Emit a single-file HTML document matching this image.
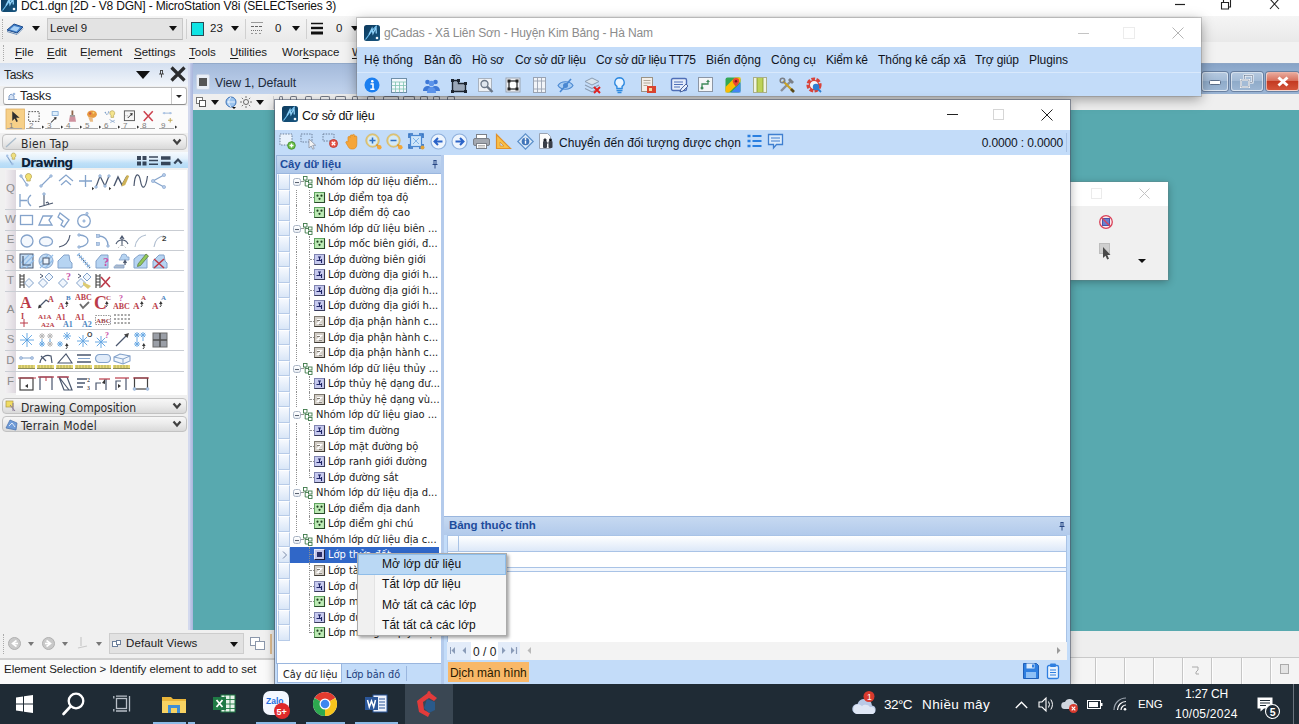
<!DOCTYPE html>
<html><head><meta charset="utf-8"><title>screen</title>
<style>
*{box-sizing:border-box;margin:0;padding:0}
html,body{width:1299px;height:724px;overflow:hidden;background:#f0f0f0;font-family:"Liberation Sans","DejaVu Sans",sans-serif;font-size:12px;color:#000}
.a{position:absolute}
.t{position:absolute;white-space:nowrap;line-height:1}
svg{position:absolute;overflow:visible}
/* MicroStation main */
#mstitle{left:0;top:0;width:1299px;height:16px;background:#fff}
#mstool{left:0;top:16px;width:1299px;height:26px;background:linear-gradient(#f5f5f5,#e9e9e9)}
#msmenu{left:0;top:42px;width:1299px;height:21px;background:#f2f2f2}
#tasks{left:0;top:63px;width:190px;height:568px;background:#f0f0f0}
#view{left:189px;top:63px;width:1110px;height:568px;background:#58a9af}
#viewtitle{left:0;top:0;width:1109px;height:31px;background:linear-gradient(#a9bfdc,#c4d4ea)}
#viewtool{left:3px;top:30px;width:1106px;height:16px;background:#f0f0f0}
#bottombar{left:0;top:630px;width:1299px;height:55px;background:#f0f0f0}
#taskbar{left:0;top:685px;width:1299px;height:39px;background:#1d2a38}

.ms{font-size:12px;color:#1a1a1a}
.ul{text-decoration:underline;text-underline-offset:2px}
.arr{width:0;height:0;border-left:4.5px solid transparent;border-right:4.5px solid transparent;border-top:5px solid #111}
.ms{font-size:11.5px}
.sg{font-size:12px;color:#111;letter-spacing:-.25px}
.tr{font-family:"DejaVu Sans Condensed","DejaVu Sans","Liberation Sans",sans-serif;font-size:11px;color:#1a1a1a}
.win{box-shadow:0 0 0 1px rgba(80,90,110,.6),0 3px 10px rgba(0,0,0,.35)}
.wins{box-shadow:0 0 0 1px rgba(110,110,110,.3),0 3px 12px rgba(0,0,0,.38)}
#tasks svg{opacity:.85}

</style></head><body>
<!-- top -->
<div class="a" id="mstitle"></div>
<div class="a" id="mstool"></div>
<div class="a" id="msmenu"></div>

<!-- MS title -->
<svg class="a" style="left:1px;top:-4px" width="16" height="16" viewBox="0 0 16 16"><defs><linearGradient id="lgC" x1="0" y1="0" x2="1" y2="1"><stop offset="0" stop-color="#0d3b5e"/><stop offset="1" stop-color="#17557f"/></linearGradient></defs><rect x="0" y="0" width="16" height="16" rx="2.5" fill="url(#lgC)"/><path d="M1.5 14.5C5 10 8 5 12.5 .8" stroke="#6cc0f2" stroke-width="1.1" fill="none"/><path d="M5 9.5l3-6 1 5 3-6 .3 6" stroke="#8fd0f7" stroke-width="1.3" fill="none"/><circle cx="13" cy="13" r="1.3" fill="#f2f8fc"/></svg>
<div class="t" id="mstt" style="left:21px;top:0px;font-size:12px;letter-spacing:-.17px;color:#111">DC1.dgn [2D - V8 DGN] - MicroStation V8i (SELECTseries 3)</div>
<!-- main win buttons -->
<svg class="a" style="left:1170px;top:0" width="129" height="14" viewBox="0 0 129 14"><path d="M5 4.5H15" stroke="#222" stroke-width="1.2"/><path d="M51.5 2.5h7v6.5h-7z M53.5 2.5v-2.5 M60.5 0v7h-2" stroke="#222" stroke-width="1.1" fill="none"/><path d="M100 -1L109 9M109 -1L100 9" stroke="#222" stroke-width="1.1"/></svg>
<!-- MS toolbar -->
<div class="a" style="left:2px;top:19px;width:2px;height:20px;border-left:1px dotted #aaa"></div>
<svg class="a" style="left:6px;top:21px" width="18" height="16" viewBox="0 0 18 16"><path d="M1 9L11 12L17 6L8 3Z" fill="#3f7fc9" stroke="#1f4c8c" stroke-width="1"/><path d="M4 8.5L10.5 10.5L14 6.5L8 5Z" fill="#a8d0f5"/><path d="M1 10.5L11 13.5L17 7.5" stroke="#6c8fb8" fill="none"/></svg>
<div class="a arr" style="left:32px;top:26px"></div>
<div class="a" style="left:47px;top:18px;width:136px;height:22px;background:#e3e3e3;border:1px solid #c8c8c8;border-bottom-color:#b5b5b5"></div>
<div class="t ms" style="left:50px;top:23px">Level 9</div>
<div class="a arr" style="left:169px;top:26px"></div>
<div class="a" style="left:186px;top:19px;width:1px;height:20px;background:#d0d0d0"></div>
<div class="a" style="left:191px;top:22px;width:13px;height:14px;background:#10e4e4;border:1px solid #2a4a55"></div>
<div class="t ms" style="left:210px;top:23px">23</div>
<div class="a arr" style="left:231px;top:26px"></div>
<div class="a" style="left:245px;top:19px;width:1px;height:20px;background:#d0d0d0"></div>
<svg class="a" style="left:250px;top:21px" width="14" height="14" viewBox="0 0 14 14"><path d="M1 1.5H13" stroke="#999" stroke-width="1"/><path d="M1 5.5H13" stroke="#666" stroke-width="1" stroke-dasharray="3 1"/><path d="M1 9.5H13" stroke="#777" stroke-width="1" stroke-dasharray="1 1"/><path d="M1 12.5H13" stroke="#999" stroke-width="1" stroke-dasharray="2 2"/></svg>
<div class="t ms" style="left:275px;top:23px">0</div>
<div class="a arr" style="left:292px;top:26px"></div>
<div class="a" style="left:306px;top:19px;width:1px;height:20px;background:#d0d0d0"></div>
<svg class="a" style="left:311px;top:22px" width="13" height="13" viewBox="0 0 13 13"><path d="M0 1.5H12" stroke="#111" stroke-width="1.5"/><path d="M0 6H12" stroke="#111" stroke-width="2.4"/><path d="M0 11H12" stroke="#111" stroke-width="3"/></svg>
<div class="t ms" style="left:336px;top:23px">0</div>
<div class="a arr" style="left:351px;top:26px"></div>
<!-- MS menu -->
<div class="a" style="left:3px;top:45px;width:2px;height:16px;border-left:1px dotted #aaa"></div>
<div class="t ms" style="left:15px;top:47px"><span class="ul">F</span>ile</div>
<div class="t ms" style="left:47px;top:47px"><span class="ul">E</span>dit</div>
<div class="t ms" style="left:80px;top:47px">E<span class="ul">l</span>ement</div>
<div class="t ms" style="left:134px;top:47px"><span class="ul">S</span>ettings</div>
<div class="t ms" style="left:189px;top:47px"><span class="ul">T</span>ools</div>
<div class="t ms" style="left:230px;top:47px"><span class="ul">U</span>tilities</div>
<div class="t ms" style="left:282px;top:47px">Wor<span class="ul">k</span>space</div>
<div class="t ms" style="left:352px;top:47px"><span class="ul">W</span>indow</div>

<!-- view -->
<div class="a" id="view">
<div class="a" style="left:0;top:0;width:1110px;height:31px;background:linear-gradient(#a3b9da,#c1d3ed)"></div>
<div class="a" style="left:300px;top:0;width:810px;height:32px;background:linear-gradient(#86a2c6 0%,#8fabcd 20%,#99b3d3 100%)"></div>
<div class="a" style="left:0;top:0;width:1110px;height:1px;background:#8fa6c6;opacity:.8"></div>
<div class="a" style="left:4px;top:31px;width:1106px;height:16px;background:#efefef"></div>
<div class="a" style="left:0;top:0;width:4px;height:568px;background:linear-gradient(90deg,#c9d1ec,#a9b5dc)"></div>
<div class="a" style="left:1px;top:1px;width:0;height:0">
<div class="a" style="left:6px;top:10px;width:14px;height:16px;background:#e9eef6;border-radius:2px;border:1px solid #c9d4e6"></div><div class="a" style="left:9px;top:14px;width:8px;height:8px;background:#555"></div>
<div class="t" style="left:25px;top:13px;font-size:12.3px;color:#1d2a3c;letter-spacing:-.1px">View 1, Default</div>
<svg style="left:6px;top:33px" width="11" height="11" viewBox="0 0 11 11"><rect x=".5" y=".5" width="6" height="6" fill="#fff" stroke="#777"/><rect x="3.5" y="3.5" width="6" height="6" fill="#fff" stroke="#555"/></svg>
<div class="a arr" style="left:21px;top:36px;border-left-width:4px;border-right-width:4px"></div>
<svg style="left:35px;top:32px" width="13" height="14" viewBox="0 0 13 14"><circle cx="6" cy="6" r="5" fill="#9cc4ee" stroke="#3f74b8"/><path d="M2 6h8M6 1c-3 3-3 7 0 10" stroke="#fff" stroke-width=".8" fill="none"/><path d="M7 11l2 2 2-2z" fill="#111"/></svg>
<svg style="left:50px;top:32px" width="12" height="12" viewBox="0 0 12 12"><circle cx="6" cy="6" r="2.5" fill="#f2f2f2" stroke="#666"/><path d="M6 0v2M6 10v2M0 6h2M10 6h2M1.8 1.8l1.4 1.4M8.8 8.8l1.4 1.4M10.2 1.8L8.8 3.2M1.8 10.2l1.4-1.4" stroke="#777" stroke-width="1"/></svg>
<div class="a arr" style="left:66px;top:36px;border-left-width:4px;border-right-width:4px"></div>
<div class="a" style="left:83px;top:32px;width:1px;height:13px;background:#cfcfcf"></div>
<div class="a" style="left:89px;top:32px;width:4px;height:4px;border:1px solid #4a5160;border-bottom:none;border-radius:2px 2px 0 0;opacity:.75"></div>
<div class="a" style="left:100px;top:32px;width:7px;height:4px;border:1px solid #4a5160;border-bottom:none;border-radius:2px 2px 0 0;opacity:.75"></div>
<div class="a" style="left:115px;top:32px;width:7px;height:4px;border:1px solid #4a5160;border-bottom:none;border-radius:2px 2px 0 0;opacity:.75"></div>
<div class="a" style="left:130px;top:32px;width:10px;height:4px;border:1px solid #4a5160;border-bottom:none;border-radius:2px 2px 0 0;opacity:.75"></div>
<div class="a" style="left:145px;top:32px;width:11px;height:4px;border:1px solid #4a5160;border-bottom:none;border-radius:2px 2px 0 0;opacity:.75"></div>
<div class="a" style="left:162px;top:32px;width:6px;height:4px;border:1px solid #4a5160;border-bottom:none;border-radius:2px 2px 0 0;opacity:.75"></div>
<div class="a" style="left:177px;top:32px;width:8px;height:4px;border:1px solid #4a5160;border-bottom:none;border-radius:2px 2px 0 0;opacity:.75"></div>
<div class="a" style="left:193px;top:32px;width:16px;height:4px;border:1px solid #4a5160;border-bottom:none;border-radius:2px 2px 0 0;opacity:.75"></div>
<div class="a" style="left:213px;top:32px;width:12px;height:4px;border:1px solid #4a5160;border-bottom:none;border-radius:2px 2px 0 0;opacity:.75"></div>
<div class="a" style="left:230px;top:32px;width:8px;height:4px;border:1px solid #4a5160;border-bottom:none;border-radius:2px 2px 0 0;opacity:.75"></div>
<div class="a" style="left:243px;top:32px;width:7px;height:4px;border:1px solid #4a5160;border-bottom:none;border-radius:2px 2px 0 0;opacity:.75"></div>
<div class="a" style="left:257px;top:32px;width:8px;height:4px;border:1px solid #4a5160;border-bottom:none;border-radius:2px 2px 0 0;opacity:.75"></div>
<div class="a" style="left:1012px;top:8px;width:26px;height:19px;border-radius:3px;border:1px solid rgba(255,255,255,.55);box-shadow:0 0 0 1px rgba(70,90,120,.55);background:linear-gradient(#b4c8df 0%,#a3bbd6 45%,#8fabc9 50%,#9cb6d3 100%)"></div><svg style="left:1019px;top:16px" width="12" height="5" viewBox="0 0 12 5"><rect x=".5" y=".5" width="11" height="4" rx="1" fill="#fff" stroke="#5c6f8a"/></svg>
<div class="a" style="left:1041px;top:8px;width:32px;height:19px;border-radius:3px;border:1px solid rgba(255,255,255,.55);box-shadow:0 0 0 1px rgba(70,90,120,.55);background:linear-gradient(#b4c8df 0%,#a3bbd6 45%,#8fabc9 50%,#9cb6d3 100%)"></div><svg style="left:1050px;top:11px" width="14" height="13" viewBox="0 0 14 13"><rect x="4.5" y=".5" width="8" height="7" fill="none" stroke="#fff" stroke-width="2"/><rect x="4.5" y=".5" width="8" height="7" fill="none" stroke="#5c6f8a" stroke-width=".6"/><rect x="1" y="5" width="8" height="7" fill="#a3bbd6" stroke="#fff" stroke-width="2"/><rect x="1" y="5" width="8" height="7" fill="none" stroke="#5c6f8a" stroke-width=".6"/></svg>
<div class="a" style="left:1076px;top:8px;width:33px;height:19px;border-radius:3px;border:1px solid rgba(255,255,255,.55);box-shadow:0 0 0 1px rgba(70,90,120,.55);background:linear-gradient(#e8a89a 0%,#d8705c 45%,#c43a22 50%,#d4553a 100%)"></div><svg style="left:1087px;top:12px" width="12" height="11" viewBox="0 0 12 11"><path d="M1.5 1.5l9 8M10.5 1.5l-9 8" stroke="#fff" stroke-width="3"/></svg>
</div></div>

<!-- tasks -->
<div class="a" id="tasks">
<div class="a" style="left:0;top:0;width:189px;height:23px;background:linear-gradient(#d3dff0,#f1f5fa)"></div>
<div class="t" style="left:4px;top:6px;font-size:12px;letter-spacing:-.3px;color:#222">Tasks</div>
<div class="a" style="left:136px;top:8px;width:0;height:0;border-left:7.5px solid transparent;border-right:7.5px solid transparent;border-top:8px solid #111"></div>
<svg style="left:158px;top:6px" width="7" height="9" viewBox="0 0 7 9"><path d="M2 1.5h3M2.5 1.5v3.5M4.5 1.5v3.5M1 5h5M3.5 5v3.5" stroke="#333" stroke-width="1" fill="none"/></svg>
<svg style="left:170px;top:3px" width="16" height="16" viewBox="0 0 16 16"><path d="M1.5 1.5L14.5 14.5M14.5 1.5L1.5 14.5" stroke="#0a0a0a" stroke-width="3.2" fill="none"/></svg>
<div class="a" style="left:3px;top:24px;width:184px;height:18px;background:#fff;border:1px solid #b9b9b9;border-radius:3px;border-bottom-color:#8d8d8d"></div>
<div class="a" style="left:171px;top:25px;width:1px;height:16px;background:#c9c9c9"></div>
<svg style="left:7px;top:28px" width="11" height="10" viewBox="0 0 11 10"><path d="M1 8.5h9M2 8V5l2-2 3 2v3" stroke="#6d8fc0" fill="#cfe0f5" stroke-width="1"/><circle cx="7" cy="3" r="1.3" fill="#8fb0dc"/></svg>
<div class="t" style="left:20px;top:27px;font-size:12.5px;letter-spacing:-.2px;color:#222">Tasks</div>
<div class="a" style="left:175.5px;top:32px;width:0;height:0;border-left:3px solid transparent;border-right:3px solid transparent;border-top:3.5px solid #222"></div>
<div class="a" style="left:0;top:43px;width:188px;height:27px;background:#fbfbfb"></div>
<div class="a" style="left:16px;top:107px;width:171px;height:225px;background:#fff"></div>
<div class="a" style="left:188px;top:0;width:2px;height:568px;background:#d3d9ee"></div>
<svg style="left:6px;top:46px" width="21" height="21" viewBox="0 0 21 21"><rect x="0" y="0" width="18.5" height="20" fill="#f7c974" stroke="#d9a24a" stroke-width=".8"/><g transform="translate(2.5,0) scale(.75)"><path d="M5 3v13l3.2-3.4 2.3 4.6 2-1-2.3-4.4h4.6z" fill="#0d0d0d"/></g><text x="3" y="18.5" font-size="8" fill="#666" font-family="Liberation Sans,sans-serif">1</text><path d="M1 19.5h15" stroke="#9a9a9a" stroke-width="1"/></svg>
<svg style="left:25px;top:46px" width="21" height="21" viewBox="0 0 21 21"><g transform="translate(2.5,0) scale(.75)"><rect x="1.5" y="3.5" width="14" height="13" fill="none" stroke="#222" stroke-width="1.2" stroke-dasharray="2.2 1.6"/></g><text x="4" y="18.5" font-size="8" fill="#666" font-family="Liberation Sans,sans-serif">2</text><path d="M1 19.5h15" stroke="#9a9a9a" stroke-width="1"/><path d="M17 16.5l2.2 1.6L17 19.7z" fill="#111"/></svg>
<svg style="left:44px;top:46px" width="21" height="21" viewBox="0 0 21 21"><g transform="translate(2.5,0) scale(.75)"><rect x="7.5" y="3.5" width="8" height="5" fill="#d8ecfb" stroke="#5b8fc9" stroke-width="1"/><path d="M6 18l6-6" stroke="#111" stroke-width="1.4"/><path d="M13.5 10.5l-4 .8 3.2 3.2z" fill="#111"/></g><text x="3" y="18.5" font-size="8" fill="#666" font-family="Liberation Sans,sans-serif">3</text><path d="M1 19.5h15" stroke="#9a9a9a" stroke-width="1"/><path d="M17 16.5l2.2 1.6L17 19.7z" fill="#111"/></svg>
<svg style="left:63px;top:46px" width="21" height="21" viewBox="0 0 21 21"><g transform="translate(2.5,0) scale(.75)"><path d="M8 2h2.4v6H8z" fill="#7b4a2a"/><path d="M6 8h6.5l1.5 9H4.5z" fill="#c77f8e"/><path d="M6 8h6.5v2.3H6z" fill="#8d8d8d"/></g><text x="3" y="18.5" font-size="8" fill="#666" font-family="Liberation Sans,sans-serif">4</text><path d="M1 19.5h15" stroke="#9a9a9a" stroke-width="1"/><path d="M17 16.5l2.2 1.6L17 19.7z" fill="#111"/></svg>
<svg style="left:82px;top:46px" width="21" height="21" viewBox="0 0 21 21"><g transform="translate(2.5,0) scale(.75)"><ellipse cx="10" cy="7" rx="6.5" ry="5" fill="#e58a1f"/><circle cx="7.5" cy="6" r="1.6" fill="#c7422a"/><circle cx="12" cy="5" r="1.3" fill="#f3d35c"/><path d="M5 11l2.5 6h4l-.8-6z" fill="#e7b070"/></g><text x="3" y="18.5" font-size="8" fill="#666" font-family="Liberation Sans,sans-serif">5</text><path d="M1 19.5h15" stroke="#9a9a9a" stroke-width="1"/><path d="M17 16.5l2.2 1.6L17 19.7z" fill="#111"/></svg>
<svg style="left:101px;top:46px" width="21" height="21" viewBox="0 0 21 21"><g transform="translate(2.5,0) scale(.75)"><path d="M11.5 2.2a3.4 3.4 0 0 1 2 6.2v2.8h-3.6V8.4a3.4 3.4 0 0 1 1.6-6.2z" fill="#f3e07a" stroke="#a08a2a" stroke-width=".8"/><path d="M2.5 5l2 3M6.5 4.5l-1 3" stroke="#6f93c2" stroke-width="1"/><circle cx="2.5" cy="4.5" r="1" fill="#6f93c2"/><circle cx="6.8" cy="4" r="1" fill="#6f93c2"/><path d="M8 14l7 4M9 18l6-3" stroke="#6f93c2" stroke-width="1"/></g><text x="3" y="18.5" font-size="8" fill="#666" font-family="Liberation Sans,sans-serif">6</text><path d="M1 19.5h15" stroke="#9a9a9a" stroke-width="1"/><path d="M17 16.5l2.2 1.6L17 19.7z" fill="#111"/></svg>
<svg style="left:120px;top:46px" width="21" height="21" viewBox="0 0 21 21"><g transform="translate(2.5,0) scale(.75)"><rect x="2.5" y="2.5" width="13.5" height="13" fill="#f5f5f5" stroke="#333" stroke-width="1.2"/><path d="M7 12l5-5" stroke="#111" stroke-width="1.3"/><path d="M13.6 5.2l-4 .9 3.2 3.1z" fill="#111"/><path d="M4 9h4" stroke="#777" stroke-dasharray="1 1"/></g><text x="3" y="18.5" font-size="8" fill="#666" font-family="Liberation Sans,sans-serif">7</text><path d="M1 19.5h15" stroke="#9a9a9a" stroke-width="1"/><path d="M17 16.5l2.2 1.6L17 19.7z" fill="#111"/></svg>
<svg style="left:139px;top:46px" width="21" height="21" viewBox="0 0 21 21"><g transform="translate(2.5,0) scale(.75)"><path d="M3 3l12 13M15 3L3 16" stroke="#c4202f" stroke-width="2"/></g><text x="3" y="18.5" font-size="8" fill="#666" font-family="Liberation Sans,sans-serif">8</text><path d="M1 19.5h15" stroke="#9a9a9a" stroke-width="1"/></svg>
<svg style="left:158px;top:46px" width="21" height="21" viewBox="0 0 21 21"><g transform="translate(2.5,0) scale(.75)"><path d="M3 5.5h12" stroke="#6f93c2" stroke-width="1"/><circle cx="5" cy="5.5" r="1.4" fill="#9dbbe3"/><circle cx="13" cy="5.5" r="1.4" fill="#9dbbe3"/><path d="M10 15h6M13 12v6" stroke="#b79b3a" stroke-width="1.3"/></g><text x="3" y="18.5" font-size="8" fill="#666" font-family="Liberation Sans,sans-serif">9</text><path d="M1 19.5h15" stroke="#9a9a9a" stroke-width="1"/><path d="M17 16.5l2.2 1.6L17 19.7z" fill="#111"/></svg>
<div class="a" style="left:2px;top:71px;width:185px;height:16px;border:1px solid #c2c2c2;border-radius:4px;background:linear-gradient(#f7f7f7 0%,#ececec 45%,#d9d9d9 100%)"></div><svg style="left:5px;top:73px" width="14" height="13" viewBox="0 0 14 13"><path d="M1 11L11 2" stroke="#9fb4c6" stroke-width="1.3"/></svg><div class="t" style="left:21px;top:74.5px;font-size:12px;letter-spacing:0.3px;color:#2a2a2a;font-family:'DejaVu Sans Condensed','DejaVu Sans',sans-serif">Bien Tap</div><svg style="left:172px;top:75px" width="10" height="8" viewBox="0 0 10 8"><path d="M1.5 1.5L5 5.5 8.5 1.5" stroke="#222" stroke-width="2.2" fill="none"/></svg>
<div class="a" style="left:0;top:89px;width:188px;height:16px;background:linear-gradient(#f6fafe 0%,#e3f1fc 40%,#bfe0f8 70%,#b3daf6 100%)"></div>
<svg style="left:5px;top:89px" width="13" height="15" viewBox="0 0 13 15"><path d="M2 4l5 8" stroke="#6f93c2" stroke-width="1.1"/><circle cx="2.2" cy="3.8" r="1.2" fill="#9dbbe3"/><circle cx="7.4" cy="12" r="1.2" fill="#9dbbe3"/><path d="M8.5 1a2.4 2.4 0 0 1 1.3 4.4v1.8h-2.6V5.4A2.4 2.4 0 0 1 8.5 1z" fill="#f0dc6a" stroke="#a08a2a" stroke-width=".6"/></svg>
<div class="t" style="left:21px;top:94px;font-size:12px;font-weight:bold;color:#0e2238;font-family:'DejaVu Sans',sans-serif;letter-spacing:-.7px">Drawing</div>
<svg style="left:137px;top:93px" width="10" height="10" viewBox="0 0 10 10"><rect x="0" y="0" width="4" height="4" fill="#1c2a3e"/><rect x="5.5" y="0" width="4" height="4" fill="#1c2a3e"/><rect x="0" y="5.5" width="4" height="4" fill="#1c2a3e"/><rect x="5.5" y="5.5" width="4" height="4" fill="#1c2a3e"/></svg>
<svg style="left:149px;top:93px" width="10" height="10" viewBox="0 0 10 10"><path d="M0 1h9M0 4.6h9M0 8.2h9" stroke="#1c2a3e" stroke-width="1.5"/></svg>
<svg style="left:161px;top:93px" width="10" height="10" viewBox="0 0 10 10"><path d="M0 2h9.5M0 7.5h9.5" stroke="#1c2a3e" stroke-width="3.3"/></svg>
<svg style="left:173px;top:94px" width="10" height="8" viewBox="0 0 10 8"><path d="M1.3 6.5L5 2.5 8.7 6.5" stroke="#1c2a3e" stroke-width="2.2" fill="none"/></svg>
<div class="a" style="left:5px;top:107px;width:11px;height:39px;background:linear-gradient(90deg,#f3f1f3,#ddd7de)"></div>
<div class="t" style="left:5px;top:120px;width:11px;text-align:center;font-size:11.5px;color:#8c8c8c">Q</div>
<div class="a" style="left:5px;top:146px;width:179px;height:1px;background:#c9cdd3"></div>
<div class="a" style="left:5px;top:147px;width:11px;height:20px;background:linear-gradient(90deg,#f3f1f3,#ddd7de)"></div>
<div class="t" style="left:5px;top:151px;width:11px;text-align:center;font-size:11.5px;color:#8c8c8c">W</div>
<div class="a" style="left:5px;top:167px;width:179px;height:1px;background:#c9cdd3"></div>
<div class="a" style="left:5px;top:168px;width:11px;height:19px;background:linear-gradient(90deg,#f3f1f3,#ddd7de)"></div>
<div class="t" style="left:5px;top:171px;width:11px;text-align:center;font-size:11.5px;color:#8c8c8c">E</div>
<div class="a" style="left:5px;top:187px;width:179px;height:1px;background:#c9cdd3"></div>
<div class="a" style="left:5px;top:188px;width:11px;height:19px;background:linear-gradient(90deg,#f3f1f3,#ddd7de)"></div>
<div class="t" style="left:5px;top:191px;width:11px;text-align:center;font-size:11.5px;color:#8c8c8c">R</div>
<div class="a" style="left:5px;top:207px;width:179px;height:1px;background:#c9cdd3"></div>
<div class="a" style="left:5px;top:208px;width:11px;height:20px;background:linear-gradient(90deg,#f3f1f3,#ddd7de)"></div>
<div class="t" style="left:5px;top:212px;width:11px;text-align:center;font-size:11.5px;color:#8c8c8c">T</div>
<div class="a" style="left:5px;top:228px;width:179px;height:1px;background:#c9cdd3"></div>
<div class="a" style="left:5px;top:229px;width:11px;height:37px;background:linear-gradient(90deg,#f3f1f3,#ddd7de)"></div>
<div class="t" style="left:5px;top:241px;width:11px;text-align:center;font-size:11.5px;color:#8c8c8c">A</div>
<div class="a" style="left:5px;top:266px;width:179px;height:1px;background:#c9cdd3"></div>
<div class="a" style="left:5px;top:267px;width:11px;height:20px;background:linear-gradient(90deg,#f3f1f3,#ddd7de)"></div>
<div class="t" style="left:5px;top:271px;width:11px;text-align:center;font-size:11.5px;color:#8c8c8c">S</div>
<div class="a" style="left:5px;top:287px;width:179px;height:1px;background:#c9cdd3"></div>
<div class="a" style="left:5px;top:288px;width:11px;height:20px;background:linear-gradient(90deg,#f3f1f3,#ddd7de)"></div>
<div class="t" style="left:5px;top:292px;width:11px;text-align:center;font-size:11.5px;color:#8c8c8c">D</div>
<div class="a" style="left:5px;top:308px;width:179px;height:1px;background:#c9cdd3"></div>
<div class="a" style="left:5px;top:309px;width:11px;height:21px;background:linear-gradient(90deg,#f3f1f3,#ddd7de)"></div>
<div class="t" style="left:5px;top:313px;width:11px;text-align:center;font-size:11.5px;color:#8c8c8c">F</div>
<svg style="left:18px;top:109px" width="18" height="18" viewBox="0 0 18 18"><path d="M3 4l6 9" stroke="#6f93c2" stroke-width="1.1" fill="none" /><circle cx="3" cy="4" r="1.3" fill="#a9c3e6" stroke="#6f93c2" stroke-width=".6"/><circle cx="9" cy="13" r="1.3" fill="#a9c3e6" stroke="#6f93c2" stroke-width=".6"/><path d="M10.5 1.5a3 3 0 0 1 1.7 5.5v2h-3.4v-2A3 3 0 0 1 10.5 1.5z" fill="#f0dc5a" stroke="#a08a2a" stroke-width=".7"/></svg>
<svg style="left:38px;top:109px" width="18" height="18" viewBox="0 0 18 18"><path d="M3 14L13 4" stroke="#6f93c2" stroke-width="1.1" fill="none" /><circle cx="3" cy="14" r="1.3" fill="#a9c3e6" stroke="#6f93c2" stroke-width=".6"/><circle cx="13" cy="4" r="1.3" fill="#a9c3e6" stroke="#6f93c2" stroke-width=".6"/></svg>
<svg style="left:57px;top:109px" width="18" height="18" viewBox="0 0 18 18"><path d="M2 9l7-6 7 6M4 13l5-4.5 5 4.5" stroke="#6f93c2" stroke-width="1.2" fill="none" /></svg>
<svg style="left:77px;top:109px" width="18" height="18" viewBox="0 0 18 18"><path d="M2 9h13M8.5 3v12" stroke="#6f93c2" stroke-width="1.3" fill="none" /></svg>
<svg style="left:94px;top:109px" width="18" height="18" viewBox="0 0 18 18"><path d="M2 15l4-11 5 10 4-10" stroke="#2b3a55" stroke-width="1.2" fill="none" /><circle cx="2" cy="15" r="1.3" fill="#a9c3e6" stroke="#6f93c2" stroke-width=".6"/><circle cx="6" cy="4" r="1.3" fill="#a9c3e6" stroke="#6f93c2" stroke-width=".6"/><circle cx="11" cy="14" r="1.3" fill="#a9c3e6" stroke="#6f93c2" stroke-width=".6"/><circle cx="15" cy="4" r="1.3" fill="#a9c3e6" stroke="#6f93c2" stroke-width=".6"/><path d="M-2 15l2.2 1.6L-2 18.2z" fill="#111"/><path d="M15 15l2.2 1.6L15 18.2z" fill="#111"/></svg>
<svg style="left:113px;top:109px" width="18" height="18" viewBox="0 0 18 18"><path d="M1 14l4-9 4 8 5-9" stroke="#2b3a55" stroke-width="1.4" fill="none" /><path d="M9 12l5-9 2.2 1-4 9-3.5 1.5z" fill="#c7a53a"/></svg>
<svg style="left:132px;top:109px" width="18" height="18" viewBox="0 0 18 18"><path d="M2 14c1-14 5-14 6.5-5s5 9 7-5" stroke="#2b3a55" stroke-width="1.2" fill="none" /></svg>
<svg style="left:150px;top:109px" width="18" height="18" viewBox="0 0 18 18"><path d="M14 3L3 9l11 6" stroke="#6f93c2" stroke-width="1.2" fill="none" /><circle cx="14" cy="3" r="1.6" fill="#a9c3e6" stroke="#6f93c2" stroke-width=".6"/><circle cx="3" cy="9" r="1.6" fill="#a9c3e6" stroke="#6f93c2" stroke-width=".6"/><circle cx="14" cy="15" r="1.6" fill="#a9c3e6" stroke="#6f93c2" stroke-width=".6"/></svg>
<svg style="left:18px;top:128px" width="18" height="18" viewBox="0 0 18 18"><path d="M2 3v13M2 9.5h7M13 4c-4 3-4 8 0 11" stroke="#6f93c2" stroke-width="1.3" fill="none" /></svg>
<svg style="left:38px;top:128px" width="18" height="18" viewBox="0 0 18 18"><path d="M6 3v11M1 16l14-4M8 12c2-2 3 0 2 2" stroke="#2b3a55" stroke-width="1.1" fill="none" /><circle cx="6" cy="3" r="1.3" fill="#a9c3e6" stroke="#6f93c2" stroke-width=".6"/></svg>
<svg style="left:18px;top:148px" width="18" height="18" viewBox="0 0 18 18"><rect x="2.5" y="4.5" width="12" height="9" fill="#fff" stroke="#6f93c2" stroke-width="1.3"/></svg>
<svg style="left:37px;top:148px" width="18" height="18" viewBox="0 0 18 18"><path d="M2 14L6 5h9l-3 4 3 5z" stroke="#6f93c2" stroke-width="1.3" fill="#fff" /></svg>
<svg style="left:56px;top:148px" width="18" height="18" viewBox="0 0 18 18"><path d="M4 2l9 7-5 7-3-2 2-4-5-4z" stroke="#6f93c2" stroke-width="1.3" fill="#fff" /></svg>
<svg style="left:75px;top:148px" width="18" height="18" viewBox="0 0 18 18"><circle cx="9" cy="10" r="6.3" fill="#fff" stroke="#6f93c2" stroke-width="1.3"/><circle cx="9" cy="10" r="1.2" fill="#a9c3e6" stroke="#6f93c2" stroke-width=".6"/><circle cx="12" cy="2.5" r="1.2" fill="#a9c3e6" stroke="#6f93c2" stroke-width=".6"/></svg>
<svg style="left:18px;top:169px" width="18" height="18" viewBox="0 0 18 18"><circle cx="9" cy="9" r="6" fill="#f3f7fd" stroke="#6f93c2" stroke-width="1.3"/></svg>
<svg style="left:37px;top:169px" width="18" height="18" viewBox="0 0 18 18"><ellipse cx="9" cy="9.5" rx="6.5" ry="4.5" fill="#f3f7fd" stroke="#6f93c2" stroke-width="1.3"/></svg>
<svg style="left:56px;top:169px" width="18" height="18" viewBox="0 0 18 18"><path d="M3 15c6-1 10-5 11-12" stroke="#2b3a55" stroke-width="1.1" fill="none" /></svg>
<svg style="left:75px;top:169px" width="18" height="18" viewBox="0 0 18 18"><path d="M4 3c12 0 12 11 0 12" stroke="#6f93c2" stroke-width="1.3" fill="none" /><circle cx="4" cy="3" r="1.3" fill="#a9c3e6" stroke="#6f93c2" stroke-width=".6"/><circle cx="4" cy="15" r="1.3" fill="#a9c3e6" stroke="#6f93c2" stroke-width=".6"/></svg>
<svg style="left:94px;top:169px" width="18" height="18" viewBox="0 0 18 18"><path d="M4 4c7 0 10 4 10 10" stroke="#6f93c2" stroke-width="1.3" fill="none" /><rect x="2.5" y="2.5" width="3" height="3" fill="#a9c3e6" stroke="#6f93c2" stroke-width=".6"/><rect x="2.5" y="10.5" width="3" height="3" fill="#a9c3e6" stroke="#6f93c2" stroke-width=".6"/><circle cx="14" cy="14" r="1.3" fill="#a9c3e6" stroke="#6f93c2" stroke-width=".6"/></svg>
<svg style="left:113px;top:169px" width="18" height="18" viewBox="0 0 18 18"><path d="M3 12a6.5 6.5 0 0 1 12 0" stroke="#2b3a55" stroke-width="1.1" fill="none" /><path d="M9 14V5M7 7l2-3 2 3" stroke="#2b3a55" stroke-width="1.1" fill="none" /><path d="M5 16l4-4 4 4" stroke="#aaa" stroke-width="0.8" fill="none" stroke-dasharray="1.5 1"/></svg>
<svg style="left:132px;top:169px" width="18" height="18" viewBox="0 0 18 18"><path d="M3 15c1-7 5-11 11-12" stroke="#9fb0c6" stroke-width="1.1" fill="none" /></svg>
<svg style="left:151px;top:169px" width="18" height="18" viewBox="0 0 18 18"><path d="M3 15c1-7 5-11 10-11" stroke="#9fb0c6" stroke-width="1.1" fill="none" /><text x="11" y="9" font-size="8" fill="#111" font-family="Liberation Sans,sans-serif" font-weight="bold">2</text></svg>
<svg style="left:18px;top:189px" width="18" height="18" viewBox="0 0 18 18"><rect x="2" y="2" width="13" height="14" fill="#b9d7f3" stroke="#2b3a55"/><path d="M3 16L16 3M3 11l8-8M8 16l8-8" stroke="#7fb2e6" stroke-width="1.2"/><path d="M5 4v9h8" stroke="#2b3a55" stroke-width="1.2" fill="none" /></svg>
<svg style="left:37px;top:189px" width="18" height="18" viewBox="0 0 18 18"><circle cx="9" cy="9" r="7" fill="#b9d7f3" stroke="#6f93c2"/><path d="M3 16L16 3M3 11l8-8M8 16l8-8" stroke="#7fb2e6" stroke-width="1.2"/><rect x="6" y="6" width="6" height="6" fill="#e8f2fc" stroke="#2b3a55"/></svg>
<svg style="left:56px;top:189px" width="18" height="18" viewBox="0 0 18 18"><path d="M2 16V9l6-6h5l1 6 2 2v5z" stroke="#6f93c2" stroke-width="1" fill="#aacdf0" /></svg>
<svg style="left:75px;top:189px" width="18" height="18" viewBox="0 0 18 18"><path d="M3 2l12 14" stroke="#2b3a55" stroke-width="1" fill="none" /><path d="M3 2l12 14" stroke="#7fb2e6" stroke-width="3.5" fill="none" stroke-dasharray="1.5 1.5"/></svg>
<svg style="left:94px;top:189px" width="18" height="18" viewBox="0 0 18 18"><path d="M2 16V9l5-6h7v13z" stroke="#6f93c2" stroke-width="1" fill="#aacdf0" /><text x="9" y="14" font-size="12" font-weight="bold" fill="#c0309a" font-family="Liberation Serif,serif">?</text></svg>
<svg style="left:113px;top:189px" width="18" height="18" viewBox="0 0 18 18"><path d="M8 5a3 3 0 0 1 6 0h2v3H6z" stroke="#6f93c2" stroke-width="0.8" fill="#aacdf0" /><path d="M1 16a3 3 0 0 1 4-3h6v3z" stroke="#6f93c2" stroke-width="0.8" fill="#9fb0c6" /><path d="M12 13V9M10.5 11l1.5-2.5 1.5 2.5" stroke="#2b3a55" stroke-width="1.2" fill="none" /></svg>
<svg style="left:132px;top:189px" width="18" height="18" viewBox="0 0 18 18"><path d="M2 16V7l5-4h8v13z" stroke="#6f93c2" stroke-width="1" fill="#aacdf0" /><path d="M6 12L14 2l2.5 2-8 9.5-3 1z" fill="#7fbf3f" stroke="#3a5a1a" stroke-width=".7"/></svg>
<svg style="left:151px;top:189px" width="18" height="18" viewBox="0 0 18 18"><path d="M2 16V9l6-6h5l1 6 2 2v5z" stroke="#6f93c2" stroke-width="1" fill="#aacdf0" /><path d="M3 7l10 9M13 7L3 16" stroke="#b0182a" stroke-width="1.6" fill="none" /></svg>
<svg style="left:18px;top:209px" width="18" height="18" viewBox="0 0 18 18"><path d="M2 2v14M6 2v14M2 4h4M2 7h4M2 10h4M2 13h4" stroke="#222" stroke-width="1.1" fill="none"/><path d="M11 6.5l4.5 4.5-4.5 4.5-4.5-4.5z" fill="#eef5fd" stroke="#6f93c2" stroke-width="1"/></svg>
<svg style="left:37px;top:209px" width="18" height="18" viewBox="0 0 18 18"><path d="M6 6.5l4.5 4.5-4.5 4.5-4.5-4.5z" fill="#eef5fd" stroke="#6f93c2" stroke-width="1"/><path d="M12 1l4 4-4 4-4-4z" fill="#eef5fd" stroke="#6f93c2" stroke-width="1"/><path d="M3 2l3 2-3 2" stroke="#2b3a55" stroke-width="1" fill="none" /></svg>
<svg style="left:56px;top:209px" width="18" height="18" viewBox="0 0 18 18"><path d="M7 6.5l4.5 4.5-4.5 4.5-4.5-4.5z" fill="#eef5fd" stroke="#6f93c2" stroke-width="1"/><text x="10" y="8" font-size="10" font-weight="bold" fill="#c0309a" font-family="Liberation Serif,serif">?</text></svg>
<svg style="left:75px;top:209px" width="18" height="18" viewBox="0 0 18 18"><path d="M6 6.5l4.5 4.5-4.5 4.5-4.5-4.5z" fill="#eef5fd" stroke="#6f93c2" stroke-width="1"/><path d="M12 1l4 4-4 4-4-4z" fill="#eef5fd" stroke="#6f93c2" stroke-width="1"/><path d="M8 10l8 4-3 3-5-4z" fill="#d8c25a"/><path d="M3 2l3 2-3 2" stroke="#2b3a55" stroke-width="1" fill="none" /></svg>
<svg style="left:94px;top:209px" width="18" height="18" viewBox="0 0 18 18"><path d="M2 2v14M6 2v14M2 4h4M2 7h4M2 10h4M2 13h4" stroke="#222" stroke-width="1.1" fill="none"/><path d="M7 5l9 10M16 5L7 15" stroke="#b0182a" stroke-width="1.6" fill="none" /></svg>
<svg style="left:18px;top:230px" width="18" height="18" viewBox="0 0 18 18"><text x="2" y="15" font-size="16" font-weight="bold" fill="#b0182a" font-family="Liberation Serif,serif">A</text></svg>
<svg style="left:37px;top:230px" width="18" height="18" viewBox="0 0 18 18"><path d="M2 14l7-7 3 2" stroke="#2b3a55" stroke-width="1.3" fill="none" /><path d="M1 15.5l1-4 2.8 2.8z" fill="#111"/><text x="11" y="9" font-size="8" font-weight="bold" fill="#b0182a" font-family="Liberation Serif,serif">A</text></svg>
<svg style="left:56px;top:230px" width="18" height="18" viewBox="0 0 18 18"><text x="2" y="16" font-size="9" font-weight="bold" fill="#b0182a" font-family="Liberation Serif,serif">A</text><text x="10" y="7" font-size="7" font-weight="bold" fill="#2a6fb5" font-family="Liberation Serif,serif">B</text><path d="M9 11l1.8-3 1.8 3z" fill="#111"/><path d="M10.8 11q1 2 -1 3" stroke="#111" stroke-width="1" fill="none" /></svg>
<svg style="left:75px;top:230px" width="18" height="18" viewBox="0 0 18 18"><text x="0" y="7" font-size="8" font-weight="bold" fill="#b0182a" font-family="Liberation Serif,serif">ABC</text><path d="M5 11l3 4 6-6" stroke="#555" stroke-width="1.8" fill="none" /></svg>
<svg style="left:94px;top:230px" width="18" height="18" viewBox="0 0 18 18"><text x="0" y="16" font-size="18" font-weight="bold" fill="#b0182a" font-family="Liberation Serif,serif">C</text><text x="12" y="7" font-size="7" font-weight="bold" fill="#b0182a" font-family="Liberation Serif,serif">C</text><path d="M11 11l1.8-3 1.8 3z" fill="#111"/><path d="M12.8 11q1 2 -1 3" stroke="#111" stroke-width="1" fill="none" /></svg>
<svg style="left:113px;top:230px" width="18" height="18" viewBox="0 0 18 18"><text x="0" y="16" font-size="8" font-weight="bold" fill="#b0182a" font-family="Liberation Serif,serif">ABC</text><text x="6" y="8" font-size="8" font-weight="bold" fill="#c0309a" font-family="Liberation Serif,serif">?</text></svg>
<svg style="left:132px;top:230px" width="18" height="18" viewBox="0 0 18 18"><text x="1" y="16" font-size="9" font-weight="bold" fill="#b0182a" font-family="Liberation Serif,serif">A</text><text x="9" y="7" font-size="7" font-weight="bold" fill="#b0182a" font-family="Liberation Serif,serif">A</text><path d="M8 11l1.8-3 1.8 3z" fill="#111"/><path d="M9.8 11q1 2 -1 3" stroke="#111" stroke-width="1" fill="none" /></svg>
<svg style="left:151px;top:230px" width="18" height="18" viewBox="0 0 18 18"><text x="1" y="16" font-size="9" font-weight="bold" fill="#b0182a" font-family="Liberation Serif,serif">A</text><text x="10" y="7" font-size="7" font-weight="bold" fill="#2a6fb5" font-family="Liberation Serif,serif">A</text><path d="M8 11l1.8-3 1.8 3z" fill="#111"/><path d="M9.8 11q1 2 -1 3" stroke="#111" stroke-width="1" fill="none" /></svg>
<svg style="left:18px;top:248px" width="18" height="18" viewBox="0 0 18 18"><text x="3" y="8" font-size="8" font-weight="bold" fill="#b0182a" font-family="Liberation Serif,serif">I</text><path d="M2 12h8M6 8v8" stroke="#b0182a" stroke-width="1" fill="none" /></svg>
<svg style="left:37px;top:248px" width="18" height="18" viewBox="0 0 18 18"><text x="1" y="8" font-size="7" font-weight="bold" fill="#b0182a" font-family="Liberation Serif,serif">A1A</text><text x="4" y="16" font-size="7" font-weight="bold" fill="#b0182a" font-family="Liberation Serif,serif">A2A</text></svg>
<svg style="left:56px;top:248px" width="18" height="18" viewBox="0 0 18 18"><text x="0" y="9" font-size="8" font-weight="bold" fill="#b0182a" font-family="Liberation Serif,serif">A1</text><text x="7" y="16" font-size="8" font-weight="bold" fill="#2a6fb5" font-family="Liberation Serif,serif">A1</text></svg>
<svg style="left:75px;top:248px" width="18" height="18" viewBox="0 0 18 18"><text x="0" y="9" font-size="8" font-weight="bold" fill="#b0182a" font-family="Liberation Serif,serif">A1</text><text x="7" y="16" font-size="8" font-weight="bold" fill="#2a6fb5" font-family="Liberation Serif,serif">A2</text></svg>
<svg style="left:94px;top:248px" width="18" height="18" viewBox="0 0 18 18"><rect x="1.5" y="4.5" width="15" height="9" fill="none" stroke="#888" stroke-dasharray="1.5 1"/><text x="2" y="12" font-size="7" font-weight="bold" fill="#8a1a2a" font-family="Liberation Serif,serif">ABC</text></svg>
<svg style="left:113px;top:248px" width="18" height="18" viewBox="0 0 18 18"><path d="M1 4h16M1 8h16M1 12h16" stroke="#333" stroke-width="1" fill="none" stroke-dasharray="2 1.5"/></svg>
<svg style="left:18px;top:268px" width="18" height="18" viewBox="0 0 18 18"><path d="M2 9h14M9 2v14M4.1000000000000005 4.1000000000000005l9.799999999999999 9.799999999999999M13.899999999999999 4.1000000000000005l-9.799999999999999 9.799999999999999" stroke="#4f9be0" stroke-width="1" fill="none" /></svg>
<svg style="left:37px;top:268px" width="18" height="18" viewBox="0 0 18 18"><path d="M2 5h6M5 2v6M2.9000000000000004 2.9000000000000004l4.199999999999999 4.199999999999999M7.1 2.9000000000000004l-4.199999999999999 4.199999999999999" stroke="#aaa" stroke-width="1" fill="none" /><path d="M10 5h6M13 2v6M10.9 2.9000000000000004l4.199999999999999 4.199999999999999M15.1 2.9000000000000004l-4.199999999999999 4.199999999999999" stroke="#aaa" stroke-width="1" fill="none" /><path d="M2 13h6M5 10v6M2.9000000000000004 10.9l4.199999999999999 4.199999999999999M7.1 10.9l-4.199999999999999 4.199999999999999" stroke="#4f9be0" stroke-width="1" fill="none" /><path d="M10 13h6M13 10v6M10.9 10.9l4.199999999999999 4.199999999999999M15.1 10.9l-4.199999999999999 4.199999999999999" stroke="#aaa" stroke-width="1" fill="none" /><path d="M5 8v3M13 8v3" stroke="#4f9be0" stroke-width="1" fill="none" /></svg>
<svg style="left:56px;top:268px" width="18" height="18" viewBox="0 0 18 18"><path d="M7 5h8M11 1v8M8.2 2.2l5.6 5.6M13.8 2.2l-5.6 5.6" stroke="#4f9be0" stroke-width="1" fill="none" /><path d="M1 13h6M4 10v6M1.9000000000000004 10.9l4.199999999999999 4.199999999999999M6.1 10.9l-4.199999999999999 4.199999999999999" stroke="#4f9be0" stroke-width="1" fill="none" /><path d="M9 15l1.8-3 1.8 3z" fill="#111"/><path d="M10.8 15q1 2 -1 3" stroke="#111" stroke-width="1" fill="none" /></svg>
<svg style="left:75px;top:268px" width="18" height="18" viewBox="0 0 18 18"><path d="M2 10h12M8 4v12M3.8000000000000007 5.800000000000001l8.399999999999999 8.399999999999999M12.2 5.800000000000001l-8.399999999999999 8.399999999999999" stroke="#4f9be0" stroke-width="1" fill="none" /><text x="12" y="6" font-size="7" font-weight="bold" fill="#222" font-family="Liberation Sans,sans-serif">O</text></svg>
<svg style="left:94px;top:268px" width="18" height="18" viewBox="0 0 18 18"><path d="M1 11h12M7 5v12M2.8000000000000007 6.800000000000001l8.399999999999999 8.399999999999999M11.2 6.800000000000001l-8.399999999999999 8.399999999999999" stroke="#4f9be0" stroke-width="1" fill="none" /><text x="11" y="7" font-size="8" font-weight="bold" fill="#c0309a" font-family="Liberation Serif,serif">?</text></svg>
<svg style="left:113px;top:268px" width="18" height="18" viewBox="0 0 18 18"><path d="M3 15L14 4" stroke="#2b3a55" stroke-width="1.3" fill="none" /><path d="M16 2l-5 1.5 3.5 3.5z" fill="#222"/></svg>
<svg style="left:132px;top:268px" width="18" height="18" viewBox="0 0 18 18"><path d="M2 4h6M5 1v6M2.9000000000000004 1.9000000000000004l4.199999999999999 4.199999999999999M7.1 1.9000000000000004l-4.199999999999999 4.199999999999999" stroke="#4f9be0" stroke-width="1" fill="none" /><path d="M8 4h6M11 1v6M8.9 1.9000000000000004l4.199999999999999 4.199999999999999M13.1 1.9000000000000004l-4.199999999999999 4.199999999999999" stroke="#4f9be0" stroke-width="1" fill="none" /><path d="M2 13h6M5 10v6M2.9000000000000004 10.9l4.199999999999999 4.199999999999999M7.1 10.9l-4.199999999999999 4.199999999999999" stroke="#4f9be0" stroke-width="1" fill="none" /><path d="M5 7v3M11 7v3" stroke="#4f9be0" stroke-width="1" fill="none" /><path d="M10 15l1.8-3 1.8 3z" fill="#111"/><path d="M11.8 15q1 2 -1 3" stroke="#111" stroke-width="1" fill="none" /></svg>
<svg style="left:151px;top:268px" width="18" height="18" viewBox="0 0 18 18"><rect x="2" y="2" width="14" height="14" fill="#8a8f98" stroke="#555"/><path d="M9 2v14M2 9h14" stroke="#333" stroke-width="1.5"/></svg>
<svg style="left:18px;top:289px" width="18" height="18" viewBox="0 0 18 18"><path d="M3 6h11" stroke="#6f93c2" stroke-width="1" fill="none" /><circle cx="3" cy="6" r="1.5" fill="#a9c3e6" stroke="#6f93c2" stroke-width=".6"/><circle cx="14" cy="6" r="1.5" fill="#a9c3e6" stroke="#6f93c2" stroke-width=".6"/><rect x="0" y="13" width="17" height="3" fill="#e3d35f"/><path d="M0 16.5h17" stroke="#7a7a3a" stroke-width="1"/><path d="M2 13v3M5 13v3M8 13v3M11 13v3M14 13v3" stroke="#8a8a3a" stroke-width=".7"/></svg>
<svg style="left:37px;top:289px" width="18" height="18" viewBox="0 0 18 18"><path d="M3 11a8 8 0 0 1 11-7l1 7" stroke="#2b3a55" stroke-width="1.2" fill="none" /><path d="M4 4l5 5" stroke="#2b3a55" stroke-width="1.2" fill="none" /><rect x="0" y="13" width="17" height="3" fill="#e3d35f"/><path d="M0 16.5h17" stroke="#7a7a3a" stroke-width="1"/><path d="M2 13v3M5 13v3M8 13v3M11 13v3M14 13v3" stroke="#8a8a3a" stroke-width=".7"/></svg>
<svg style="left:56px;top:289px" width="18" height="18" viewBox="0 0 18 18"><path d="M2 11h14L10 2z" stroke="#2b3a55" stroke-width="1.1" fill="none" /><rect x="0" y="13" width="17" height="3" fill="#e3d35f"/><path d="M0 16.5h17" stroke="#7a7a3a" stroke-width="1"/><path d="M2 13v3M5 13v3M8 13v3M11 13v3M14 13v3" stroke="#8a8a3a" stroke-width=".7"/></svg>
<svg style="left:75px;top:289px" width="18" height="18" viewBox="0 0 18 18"><path d="M2 3h14M2 10h14" stroke="#2b3a55" stroke-width="1.3" fill="none" /><path d="M3 6.5h12" stroke="#6f93c2" stroke-width="1" fill="none" /><rect x="0" y="13" width="17" height="3" fill="#e3d35f"/><path d="M0 16.5h17" stroke="#7a7a3a" stroke-width="1"/><path d="M2 13v3M5 13v3M8 13v3M11 13v3M14 13v3" stroke="#8a8a3a" stroke-width=".7"/></svg>
<svg style="left:94px;top:289px" width="18" height="18" viewBox="0 0 18 18"><rect x="1.5" y="2.5" width="15" height="8" rx="4" fill="#dbe8f8" stroke="#6f93c2" stroke-width="1.2"/><rect x="0" y="13" width="17" height="3" fill="#e3d35f"/><path d="M0 16.5h17" stroke="#7a7a3a" stroke-width="1"/><path d="M2 13v3M5 13v3M8 13v3M11 13v3M14 13v3" stroke="#8a8a3a" stroke-width=".7"/></svg>
<svg style="left:113px;top:289px" width="18" height="18" viewBox="0 0 18 18"><path d="M1 5l6-3 10 2v5l-7 3-9-3z" stroke="#6f93c2" stroke-width="1.1" fill="#eef5fd" /><path d="M1 5l9 2 7-3M10 7v5" stroke="#6f93c2" stroke-width="1" fill="none" /><rect x="0" y="13" width="17" height="3" fill="#e3d35f"/><path d="M0 16.5h17" stroke="#7a7a3a" stroke-width="1"/><path d="M2 13v3M5 13v3M8 13v3M11 13v3M14 13v3" stroke="#8a8a3a" stroke-width=".7"/></svg>
<svg style="left:18px;top:311px" width="18" height="18" viewBox="0 0 18 18"><rect x="2" y="4" width="13" height="12" fill="none" stroke="#222" stroke-width="1.2"/><path d="M0 4h18" stroke="#b0182a" stroke-width="1" fill="none" /><path d="M7 12l3-2v4z" fill="#111"/></svg>
<svg style="left:37px;top:311px" width="18" height="18" viewBox="0 0 18 18"><path d="M3 16V3h12v13" stroke="#2b3a55" stroke-width="1.2" fill="none" /><path d="M1 3h16" stroke="#b0182a" stroke-width="1.2" fill="none" /><path d="M9 3v4" stroke="#b0182a" stroke-width="1" fill="none" /></svg>
<svg style="left:56px;top:311px" width="18" height="18" viewBox="0 0 18 18"><path d="M3 3h8l5 13H8zM3 3l10 13" stroke="#2b3a55" stroke-width="1.2" fill="none" /><path d="M1 3h12" stroke="#b0182a" stroke-width="1.2" fill="none" /></svg>
<svg style="left:75px;top:311px" width="18" height="18" viewBox="0 0 18 18"><path d="M2 5h10M2 9h8M2 13h6" stroke="#2b3a55" stroke-width="1.3" fill="none" /><text x="12" y="8" font-size="6" font-weight="bold" fill="#333" font-family="Liberation Serif,serif">2</text><text x="12" y="16" font-size="6" font-weight="bold" fill="#333" font-family="Liberation Serif,serif">3</text></svg>
<svg style="left:94px;top:311px" width="18" height="18" viewBox="0 0 18 18"><path d="M2 16V9h5M12 16V5" stroke="#2b3a55" stroke-width="1.2" fill="none" /><path d="M5 5h11" stroke="#b0182a" stroke-width="1.2" fill="none" /><path d="M8 9l3-4v5z" fill="#111"/></svg>
<svg style="left:113px;top:311px" width="18" height="18" viewBox="0 0 18 18"><path d="M3 16V7h5M13 16V4" stroke="#2b3a55" stroke-width="1.2" fill="none" /><path d="M2 4h14" stroke="#b0182a" stroke-width="1.2" fill="none" /><path d="M8 12l-3-2v4z" fill="#111"/></svg>
<svg style="left:132px;top:311px" width="18" height="18" viewBox="0 0 18 18"><rect x="2.5" y="4" width="13" height="11" fill="none" stroke="#222" stroke-width="1.2"/><path d="M1 4h16" stroke="#b0182a" stroke-width="1" fill="none" /><circle cx="2.5" cy="15" r="1.4" fill="#a9c3e6" stroke="#6f93c2" stroke-width=".6"/><circle cx="15.5" cy="15" r="1.4" fill="#a9c3e6" stroke="#6f93c2" stroke-width=".6"/></svg>
<div class="a" style="left:2px;top:335px;width:185px;height:16px;border:1px solid #c2c2c2;border-radius:4px;background:linear-gradient(#f7f7f7 0%,#ececec 45%,#d9d9d9 100%)"></div><svg style="left:5px;top:337px" width="14" height="13" viewBox="0 0 14 13"><rect x="1" y="1" width="7" height="6" fill="#f1d94a" stroke="#a08a2a" stroke-width=".7"/><path d="M5 5l5 6M8 3v8" stroke="#7a6a8a" stroke-width="1"/></svg><div class="t" style="left:21px;top:338.5px;font-size:12px;letter-spacing:-0.03px;color:#2a2a2a;font-family:'DejaVu Sans Condensed','DejaVu Sans',sans-serif">Drawing Composition</div><svg style="left:172px;top:339px" width="10" height="8" viewBox="0 0 10 8"><path d="M1.5 1.5L5 5.5 8.5 1.5" stroke="#222" stroke-width="2.2" fill="none"/></svg>
<div class="a" style="left:2px;top:353px;width:185px;height:16px;border:1px solid #c2c2c2;border-radius:4px;background:linear-gradient(#f7f7f7 0%,#ececec 45%,#d9d9d9 100%)"></div><svg style="left:5px;top:355px" width="14" height="13" viewBox="0 0 14 13"><path d="M1 10L5 2l7 3-1 7z" fill="#5b8fd6" stroke="#2a5aa0" stroke-width=".7"/><path d="M4 8l3-3 3 4" stroke="#dbe8f8" fill="none"/></svg><div class="t" style="left:21px;top:356.5px;font-size:12px;letter-spacing:0.3px;color:#2a2a2a;font-family:'DejaVu Sans Condensed','DejaVu Sans',sans-serif">Terrain Model</div><svg style="left:172px;top:357px" width="10" height="8" viewBox="0 0 10 8"><path d="M1.5 1.5L5 5.5 8.5 1.5" stroke="#222" stroke-width="2.2" fill="none"/></svg>
</div>

<!-- bottom -->
<div class="a" style="left:0;top:630px;width:275px;height:28px;background:#f0f0f0"></div>
<div class="a" style="left:0;top:658px;width:275px;height:27px;background:#fafafa;border-top:2px solid #d0d0d0"></div>
<div class="a" style="left:1070px;top:631px;width:229px;height:26px;background:#eeeeee"></div>
<div class="a" style="left:1070px;top:657px;width:229px;height:28px;background:#f4f4f4;border-top:1px solid #c9c9c9"></div>
<div class="a" style="left:1095px;top:658px;width:2px;height:26px;background:#fdfdfd;border-left:1px solid #c6c6c6"></div>
<div class="a" style="left:1124px;top:658px;width:2px;height:26px;background:#fdfdfd;border-left:1px solid #c6c6c6"></div>
<div class="a" style="left:1153px;top:658px;width:2px;height:26px;background:#fdfdfd;border-left:1px solid #c6c6c6"></div>
<div class="a" style="left:1182px;top:658px;width:2px;height:26px;background:#fdfdfd;border-left:1px solid #c6c6c6"></div>
<div class="a" style="left:1211px;top:658px;width:2px;height:26px;background:#fdfdfd;border-left:1px solid #c6c6c6"></div>
<div class="a" style="left:1241px;top:658px;width:2px;height:26px;background:#fdfdfd;border-left:1px solid #c6c6c6"></div>
<div class="a" style="left:1270px;top:658px;width:2px;height:26px;background:#fdfdfd;border-left:1px solid #c6c6c6"></div>
<svg style="left:1190px;top:665px" width="10" height="10" viewBox="0 0 10 10"><path d="M2 2h6v3l-2 2v2h3" stroke="#aaa" fill="none"/></svg>
<div class="a" style="left:1280px;top:664px;width:9px;height:10px;border:1px solid #aaa;background:#e4e4e4"></div>
<div class="a" style="left:3px;top:634px;width:2px;height:20px;border-left:1px dotted #aaa"></div>
<svg style="left:8px;top:637px" width="13" height="13" viewBox="0 0 13 13"><circle cx="6.5" cy="6.5" r="6" fill="#c9c9c9" stroke="#b0b0b0"/><path d="M8.5 3.5l-4 3 4 3" stroke="#fff" stroke-width="1.6" fill="none"/><path d="M5 6.5h5" stroke="#fff" stroke-width="1.6"/></svg>
<div class="a arr" style="left:28px;top:642px;border-top-color:#777;border-left-width:3.5px;border-right-width:3.5px;border-top-width:4px"></div>
<svg style="left:42px;top:637px" width="13" height="13" viewBox="0 0 13 13"><circle cx="6.5" cy="6.5" r="6" fill="#c9c9c9" stroke="#b0b0b0"/><path d="M4.5 3.5l4 3-4 3" stroke="#fff" stroke-width="1.6" fill="none"/><path d="M3 6.5h5" stroke="#fff" stroke-width="1.6"/></svg>
<div class="a arr" style="left:62px;top:642px;border-top-color:#777;border-left-width:3.5px;border-right-width:3.5px;border-top-width:4px"></div>
<svg style="left:77px;top:636px" width="12" height="14" viewBox="0 0 12 14"><path d="M4 1v9M1 12l9-2" stroke="#c9c9c9" stroke-width="1.2" fill="none"/></svg>
<div class="a arr" style="left:96px;top:642px;border-top-color:#777;border-left-width:3.5px;border-right-width:3.5px;border-top-width:4px"></div>
<div class="a" style="left:109px;top:633px;width:135px;height:21px;background:#e2e2e2;border:1px solid #cdcdcd"></div>
<svg style="left:112px;top:640px" width="10" height="8" viewBox="0 0 10 8"><rect x=".5" y="1.5" width="5" height="5" fill="#fff" stroke="#6b7f9b"/><rect x="4.5" y=".5" width="4" height="4" fill="#fff" stroke="#6b7f9b"/></svg>
<div class="t ms" style="left:126px;top:638px;letter-spacing:.1px">Default Views</div>
<div class="a arr" style="left:230px;top:642px;border-left-width:4px;border-right-width:4px"></div>
<svg style="left:250px;top:637px" width="16" height="14" viewBox="0 0 16 14"><rect x=".5" y=".5" width="9" height="8" fill="#fff" stroke="#8b97ab"/><rect x="5.5" y="4.5" width="9" height="8" fill="#fff" stroke="#8b97ab"/></svg>
<div class="a" style="left:270px;top:634px;width:2px;height:20px;background:#d9a86a;opacity:.7"></div>
<div class="t ms" id="stat" style="left:4px;top:664px;letter-spacing:-.02px">Element Selection &gt; Identify element to add to set</div>

<!-- small -->
<div class="a" style="left:1070px;top:182px;width:98px;height:98px;background:#f0f0f0;box-shadow:0 0 0 1px rgba(120,120,120,.22),0 2px 8px rgba(0,0,0,.3)">
<div class="a" style="left:0;top:0;width:98px;height:24px;background:#fff"></div>
<svg style="left:21px;top:6px" width="11" height="11" viewBox="0 0 11 11"><rect x=".5" y=".5" width="10" height="10" fill="none" stroke="#ebebeb"/></svg>
<svg style="left:69px;top:6px" width="11" height="11" viewBox="0 0 11 11"><path d="M.5 .5l10 10M10.5 .5l-10 10" stroke="#c3c3c3" stroke-width="1"/></svg>
<svg style="left:29px;top:33px" width="14" height="14" viewBox="0 0 14 14"><circle cx="7" cy="7" r="6.3" fill="#fbe9ec" stroke="#d9435a" stroke-width="1.3"/><rect x="3.5" y="3.5" width="7" height="7" fill="#6a7fd0" stroke="#2f3f9a" stroke-width=".8"/><path d="M2.8 2.8l8.4 8.4" stroke="#d9435a" stroke-width="1.3"/></svg>
<svg style="left:29px;top:61px" width="14" height="18" viewBox="0 0 14 18"><rect x=".5" y=".5" width="10" height="10" fill="#cfcfcf" stroke="#bdbdbd"/><path d="M4 4v11l2.5-2.3 1.7 3.8 1.8-.8-1.7-3.7h3.2z" fill="#4a4a4a"/></svg>
<div class="a arr" style="left:68px;top:77px;border-left-width:4px;border-right-width:4px;border-top-width:4.5px"></div>
</div>

<!-- gcadas -->
<div class="a wins" style="left:357px;top:18px;width:844px;height:78px;background:#fff">
<svg style="left:7px;top:7px" width="16" height="16" viewBox="0 0 16 16"><defs><linearGradient id="lgA" x1="0" y1="0" x2="1" y2="1"><stop offset="0" stop-color="#0d3b5e"/><stop offset="1" stop-color="#17557f"/></linearGradient></defs><rect x="0" y="0" width="16" height="16" rx="2.5" fill="url(#lgA)"/><path d="M1.5 14.5C5 10 8 5 12.5 .8" stroke="#6cc0f2" stroke-width="1.1" fill="none"/><path d="M5 9.5l3-6 1 5 3-6 .3 6" stroke="#8fd0f7" stroke-width="1.3" fill="none"/><circle cx="13" cy="13" r="1.3" fill="#f2f8fc"/></svg>
<div class="t" style="left:27px;top:9px;font-size:12px;color:#8c8c8c;letter-spacing:-.11px">gCadas - Xã Liên Sơn - Huyện Kim Bảng - Hà Nam</div>
<svg style="left:721px;top:10px" width="11" height="11" viewBox="0 0 11 11"><path d="M0 5.5h11" stroke="#c4c4c4" stroke-width="1"/></svg>
<svg style="left:766px;top:9px" width="12" height="12" viewBox="0 0 12 12"><rect x=".5" y=".5" width="11" height="11" fill="none" stroke="#ececec" stroke-width="1"/></svg>
<svg style="left:815px;top:9px" width="12" height="12" viewBox="0 0 12 12"><path d="M.5 .5l11 11M11.5 .5l-11 11" stroke="#b5b5b5" stroke-width="1"/></svg>
<div class="a" style="left:0;top:29px;width:844px;height:25px;background:#c3dcf9"></div>
<div class="a" style="left:0;top:54px;width:844px;height:1px;background:#d9e9fc"></div>
<div class="a" style="left:0;top:55px;width:844px;height:23px;background:#c3dcf9"></div>
<div class="t" style="left:7px;top:36px;font-size:12px;color:#10141c;letter-spacing:0.04px">Hệ thống</div>
<div class="t" style="left:67px;top:36px;font-size:12px;color:#10141c;letter-spacing:-0.01px">Bản đồ</div>
<div class="t" style="left:115px;top:36px;font-size:12px;color:#10141c;letter-spacing:-0.14px">Hồ sơ</div>
<div class="t" style="left:158px;top:36px;font-size:12px;color:#10141c;letter-spacing:-0.23px">Cơ sở dữ liệu</div>
<div class="t" style="left:239px;top:36px;font-size:12px;color:#10141c;letter-spacing:-0.29px">Cơ sở dữ liệu TT75</div>
<div class="t" style="left:349px;top:36px;font-size:12px;color:#10141c;letter-spacing:0.12px">Biến động</div>
<div class="t" style="left:414px;top:36px;font-size:12px;color:#10141c;letter-spacing:0.05px">Công cụ</div>
<div class="t" style="left:469px;top:36px;font-size:12px;color:#10141c;letter-spacing:-0.23px">Kiểm kê</div>
<div class="t" style="left:521px;top:36px;font-size:12px;color:#10141c;letter-spacing:-0.05px">Thống kê cấp xã</div>
<div class="t" style="left:618px;top:36px;font-size:12px;color:#10141c;letter-spacing:-0.11px">Trợ giúp</div>
<div class="t" style="left:672px;top:36px;font-size:12px;color:#10141c;letter-spacing:-0.06px">Plugins</div>
<svg style="left:7px;top:59px" width="17" height="17" viewBox="0 0 17 17"><circle cx="8" cy="8" r="7.5" fill="#1b7ff0"/><circle cx="8.3" cy="4.2" r="1.3" fill="#fff"/><path d="M6.5 7h2.5v5M6.3 12.3h4.2" stroke="#fff" stroke-width="1.6" fill="none"/></svg>
<svg style="left:34px;top:59px" width="17" height="17" viewBox="0 0 17 17"><rect x=".5" y="1.5" width="15" height="14" fill="#f3f8fd" stroke="#6f8fa8"/><path d="M.5 5h15M.5 8.5h15M.5 12h15M4.5 5v10.5M8.5 5v10.5M12.5 5v10.5" stroke="#7fc3b0" stroke-width=".8"/></svg>
<svg style="left:66px;top:59px" width="17" height="17" viewBox="0 0 17 17"><circle cx="4.5" cy="5" r="2.3" fill="#3e78d6"/><circle cx="12.5" cy="5" r="2.3" fill="#3e78d6"/><circle cx="8.5" cy="6.5" r="2.8" fill="#5b93ea"/><path d="M0 14c0-4 3-5 4.5-5s3 .5 4 2c1-1.5 2.5-2 4-2s4.5 1 4.5 5z" fill="#3e78d6"/><path d="M4 16c0-4 2-6 4.5-6s4.5 2 4.5 6z" fill="#5b93ea"/></svg>
<svg style="left:93px;top:59px" width="18" height="18" viewBox="0 0 18 18"><path d="M2.5 3.5h6v3h7v8h-13z" fill="#9aa7b8" stroke="#1d2530" stroke-width="1.4"/><rect x="1" y="2" width="3" height="3" fill="#1d2530"/><rect x="7" y="2" width="3" height="3" fill="#1d2530"/><rect x="14" y="5" width="3" height="3" fill="#1d2530"/><rect x="14" y="13" width="3" height="3" fill="#1d2530"/><rect x="1" y="13" width="3" height="3" fill="#1d2530"/></svg>
<svg style="left:121px;top:59px" width="17" height="17" viewBox="0 0 17 17"><rect x=".5" y="1.5" width="13" height="13" fill="#eef1f5" stroke="#a9b3c0"/><circle cx="6.5" cy="7" r="3.5" fill="#dfe6ee" stroke="#6a7686" stroke-width="1.3"/><path d="M9 9.5l5.5 5.5" stroke="#6a7686" stroke-width="2.4"/></svg>
<svg style="left:148px;top:59px" width="17" height="17" viewBox="0 0 17 17"><rect x="1" y="1" width="14" height="14" fill="#eef0f4" stroke="#9aa3b2"/><rect x="4" y="4" width="8" height="8" fill="#fff" stroke="#222" stroke-width="1.2"/><rect x="2.5" y="2.5" width="3" height="3" fill="#222"/><rect x="10.5" y="2.5" width="3" height="3" fill="#222"/><rect x="2.5" y="10.5" width="3" height="3" fill="#222"/><rect x="10.5" y="10.5" width="3" height="3" fill="#222"/></svg>
<svg style="left:175px;top:59px" width="17" height="17" viewBox="0 0 17 17"><rect x="1.5" y=".5" width="12" height="15" fill="#f1f4f8" stroke="#9aa3b2"/><path d="M5.5 .5v15M9.5 .5v15M1.5 4h12M1.5 12h12" stroke="#9aa3b2" stroke-width=".9"/></svg>
<svg style="left:200px;top:59px" width="17" height="17" viewBox="0 0 17 17"><path d="M1 8.5c3-5 12-5 15 0-3 5-12 5-15 0z" fill="#a9cdf3" stroke="#4a88d2" stroke-width="1.1"/><circle cx="8.5" cy="8.5" r="2.5" fill="#4a88d2"/><path d="M3 15L14 2" stroke="#4a88d2" stroke-width="1.6"/></svg>
<svg style="left:227px;top:59px" width="17" height="17" viewBox="0 0 17 17"><path d="M8 1l7 3.5-7 3.5-7-3.5z" fill="#d7e3ee" stroke="#8a9bb0"/><path d="M1 8l7 3.5 7-3.5M1 11.5l7 3.5 3-1.5" fill="none" stroke="#8a9bb0" stroke-width="1.1"/><path d="M10 10l6 6M16 10l-6 6" stroke="#e02020" stroke-width="2"/></svg>
<svg style="left:255px;top:59px" width="15" height="17" viewBox="0 0 15 17"><path d="M7.5 .8a4.7 4.7 0 0 1 2.6 8.6v2.1h-5.2V9.4A4.7 4.7 0 0 1 7.5 .8z" fill="#eaf4ff" stroke="#2f8ae0" stroke-width="1.4"/><path d="M4.5 13.5h6M5.5 15.5h4" stroke="#2f8ae0" stroke-width="1.4"/></svg>
<svg style="left:283px;top:59px" width="17" height="17" viewBox="0 0 17 17"><rect x="1.5" y=".5" width="11" height="14" fill="#f3efe9" stroke="#9b9386"/><path d="M3.5 3.5h7M3.5 6h7M3.5 8.5h4" stroke="#b3a99a" stroke-width="1"/><rect x="7" y="9" width="9" height="7" fill="#d9442f"/><rect x="9" y="11" width="3" height="3" fill="#f6d8a0"/></svg>
<svg style="left:314px;top:59px" width="18" height="17" viewBox="0 0 18 17"><rect x=".5" y="1.5" width="15" height="12" rx="1.5" fill="#e4ecfa" stroke="#4f6fb8" stroke-width="1.4"/><path d="M3 5h9M3 7.5h9M3 10h6" stroke="#4f6fb8" stroke-width="1"/><path d="M9 15l1-3 5-5 2 2-5 5z" fill="#e7eefc" stroke="#2f4a8c" stroke-width=".8"/></svg>
<svg style="left:341px;top:59px" width="16" height="16" viewBox="0 0 16 16"><rect x=".5" y=".5" width="14" height="14" fill="#f4f6f8" stroke="#8c96a5"/><path d="M4 11V7h6V4" stroke="#3f8a5a" stroke-width="1.3" fill="none"/><circle cx="4" cy="11" r="1.5" fill="#3f8a5a"/><path d="M8 5l2-2.5 2 2.5z" fill="#3f8a5a"/></svg>
<svg style="left:368px;top:59px" width="17" height="17" viewBox="0 0 17 17"><rect x=".5" y=".5" width="15" height="15" rx="2" fill="#34a853"/><path d="M.5 10L10 .5h5.5v4L4 15.5H.5z" fill="#fbbc04"/><path d="M6 15.5L15.5 6v9.5z" fill="#4285f4"/><path d="M11 1a3.2 3.2 0 0 1 3.2 3.2c0 2.4-3.2 5.3-3.2 5.3S7.8 6.6 7.8 4.2A3.2 3.2 0 0 1 11 1z" fill="#ea4335"/><circle cx="11" cy="4.2" r="1.2" fill="#7a1a12"/></svg>
<svg style="left:395px;top:59px" width="17" height="17" viewBox="0 0 17 17"><rect x="1.5" y=".5" width="13" height="15" fill="#f1f3df" stroke="#a9ae8a"/><rect x="5" y="1" width="6" height="14" fill="#bdd257"/><path d="M5 1v14M11 1v14" stroke="#7d962a" stroke-width=".8"/></svg>
<svg style="left:422px;top:59px" width="17" height="17" viewBox="0 0 17 17"><path d="M2 14L12 4" stroke="#8a8f98" stroke-width="2.4"/><path d="M14 14L4 4" stroke="#c9a227" stroke-width="2.2"/><path d="M11 1l4 4-2 2-4-4z" fill="#7b8088"/><circle cx="3.5" cy="3.5" r="2.3" fill="none" stroke="#7b8088" stroke-width="1.5"/><path d="M12 12l3 3" stroke="#5a4a1a" stroke-width="2.6"/></svg>
<svg style="left:449px;top:59px" width="17" height="17" viewBox="0 0 17 17"><circle cx="8" cy="8" r="6" fill="none" stroke="#d9433a" stroke-width="3.2" stroke-dasharray="3.6 1.4"/><circle cx="8" cy="8" r="4.6" fill="#f2f6fa" stroke="#d9433a" stroke-width="1.2"/><circle cx="10" cy="10" r="3.2" fill="#2f7fd0"/><path d="M12 12l3 3" stroke="#2f7fd0" stroke-width="1.8"/></svg>
</div>

<!-- csdl -->
<div class="a win" style="left:275px;top:100px;width:795px;height:584px;background:#fff">
<svg style="left:7px;top:6px" width="16" height="16" viewBox="0 0 16 16"><defs><linearGradient id="lgB" x1="0" y1="0" x2="1" y2="1"><stop offset="0" stop-color="#0d3b5e"/><stop offset="1" stop-color="#17557f"/></linearGradient></defs><rect x="0" y="0" width="16" height="16" rx="2.5" fill="url(#lgB)"/><path d="M1.5 14.5C5 10 8 5 12.5 .8" stroke="#6cc0f2" stroke-width="1.1" fill="none"/><path d="M5 9.5l3-6 1 5 3-6 .3 6" stroke="#8fd0f7" stroke-width="1.3" fill="none"/><circle cx="13" cy="13" r="1.3" fill="#f2f8fc"/></svg>
<div class="t" style="left:27px;top:10px;font-size:12.5px;color:#111;letter-spacing:-.35px">Cơ sở dữ liệu</div>
<svg style="left:672px;top:9px" width="11" height="11" viewBox="0 0 11 11"><path d="M0 5.5h11" stroke="#222" stroke-width="1"/></svg>
<svg style="left:718px;top:9px" width="11" height="11" viewBox="0 0 11 11"><rect x=".5" y=".5" width="10" height="10" fill="none" stroke="#d6d6d6" stroke-width="1"/></svg>
<svg style="left:766px;top:9px" width="12" height="12" viewBox="0 0 12 12"><path d="M.5 .5l11 11M11.5 .5l-11 11" stroke="#222" stroke-width="1"/></svg>
<div class="a" style="left:0;top:30px;width:795px;height:25px;background:#c3dcf9"></div>
<svg style="left:4px;top:33px" width="17" height="17" viewBox="0 0 17 17"><rect x="1" y="1" width="12" height="11" fill="#e9f2fc" stroke="#6d7f98" stroke-width="1" stroke-dasharray="1.5 1.2" fill="none"/><circle cx="12.5" cy="12.5" r="3.8" fill="#6cc04a" stroke="#3c8a22" stroke-width=".8"/><path d="M10.5 12.5h4M12.5 10.5v4" stroke="#fff" stroke-width="1.3"/></svg>
<svg style="left:25px;top:33px" width="17" height="17" viewBox="0 0 17 17"><rect x="1" y="1" width="11" height="8" stroke="#6d7f98" stroke-width="1" stroke-dasharray="1.5 1.2" fill="none"/><path d="M9 6v9l2.2-2 1.5 3.2 1.5-.7-1.5-3.2h3z" fill="#f4f4f4" stroke="#8a93a3" stroke-width=".8"/></svg>
<svg style="left:47px;top:33px" width="17" height="17" viewBox="0 0 17 17"><rect x="1" y="1" width="11" height="7" stroke="#6d7f98" stroke-width="1" stroke-dasharray="1.5 1.2" fill="none"/><circle cx="11.5" cy="10.5" r="4" fill="#e8564a" stroke="#b8342a" stroke-width=".8"/><path d="M9.8 8.8l3.4 3.4M13.2 8.8l-3.4 3.4" stroke="#fff" stroke-width="1.3"/></svg>
<svg style="left:70px;top:33px" width="14" height="17" viewBox="0 0 14 17"><path d="M3 9V4.5a1.1 1.1 0 0 1 2.2 0V3a1.1 1.1 0 0 1 2.2 0V2.5a1.1 1.1 0 0 1 2.2 0V4a1.1 1.1 0 0 1 2.2 0v6.5c0 4-1.5 5.5-4.5 5.5S4 15 2.5 12.5L.8 9.5c0-1.2 1.4-1.5 2.2-.5z" fill="#f5a53a" stroke="#e08a1a" stroke-width=".7"/></svg>
<svg style="left:90px;top:33px" width="17" height="17" viewBox="0 0 17 17"><circle cx="7.5" cy="7.5" r="6" fill="#d3e9f8" stroke="#e2c876" stroke-width="1.7"/><circle cx="7.5" cy="7.5" r="6.8" fill="none" stroke="#c9a85a" stroke-width=".5"/><path d="M11.5 11.5l2.5 2.5" stroke="#d9952a" stroke-width="2"/><circle cx="14.3" cy="14.3" r="2.3" fill="#f2a73a"/><path d="M4.5 7.5h6M7.5 4.5v6" stroke="#2f6fc0" stroke-width="1.5"/></svg>
<svg style="left:111px;top:33px" width="17" height="17" viewBox="0 0 17 17"><circle cx="7.5" cy="7.5" r="6" fill="#d3e9f8" stroke="#e2c876" stroke-width="1.7"/><circle cx="7.5" cy="7.5" r="6.8" fill="none" stroke="#c9a85a" stroke-width=".5"/><path d="M11.5 11.5l2.5 2.5" stroke="#d9952a" stroke-width="2"/><circle cx="14.3" cy="14.3" r="2.3" fill="#f2a73a"/><path d="M4.5 7.5h6" stroke="#2f6fc0" stroke-width="1.5"/></svg>
<svg style="left:133px;top:33px" width="17" height="17" viewBox="0 0 17 17"><rect x="2.5" y="2.5" width="11" height="11" fill="#cfe6fa" stroke="#4a88d2" stroke-width="1.2"/><path d="M1 5V1h4M11 1h4v4M15 11v4h-4M5 15H1v-4" stroke="#2f6fc0" stroke-width="1.6" fill="none"/><path d="M5 5l6 6M11 5l-6 6" stroke="#7fb2e6" stroke-width="1"/><circle cx="14.5" cy="14.5" r="2" fill="#e0a23a"/></svg>
<svg style="left:155px;top:33px" width="17" height="17" viewBox="0 0 17 17"><circle cx="8.5" cy="8.5" r="7.5" fill="#eef5fd" stroke="#8fb0dc" stroke-width="1.2"/><path d="M12.5 8.5h-8M8 5l-3.5 3.5L8 12" stroke="#2a63c8" stroke-width="2" fill="none"/></svg>
<svg style="left:176px;top:33px" width="17" height="17" viewBox="0 0 17 17"><circle cx="8.5" cy="8.5" r="7.5" fill="#eef5fd" stroke="#8fb0dc" stroke-width="1.2"/><path d="M4.5 8.5h8M9 5l3.5 3.5L9 12" stroke="#2a63c8" stroke-width="2" fill="none"/></svg>
<svg style="left:198px;top:33px" width="17" height="17" viewBox="0 0 17 17"><rect x="3.5" y="1.5" width="10" height="5" fill="#fff" stroke="#7b8088"/><rect x=".5" y="5.5" width="16" height="7" rx="1.5" fill="#a3a8b0" stroke="#7b8088"/><rect x="3.5" y="10.5" width="10" height="5" fill="#fff" stroke="#7b8088"/><path d="M5 12.5h7M5 14h7" stroke="#999" stroke-width=".7"/></svg>
<svg style="left:220px;top:33px" width="17" height="17" viewBox="0 0 17 17"><path d="M1.5 1.5v14h14z" fill="#f8c04a" stroke="#e0902a" stroke-width="1.2"/><path d="M5 9v4h4z" fill="#c3dcf9" stroke="#e0902a" stroke-width=".8"/></svg>
<svg style="left:242px;top:33px" width="17" height="17" viewBox="0 0 17 17"><path d="M8.5 .8l7.7 7.7-7.7 7.7L.8 8.5z" fill="#dbe9f8" stroke="#5b8fc9" stroke-width="1.2"/><circle cx="8.5" cy="8.5" r="3.8" fill="#3f74b8"/><path d="M8.5 7.5v3.3" stroke="#fff" stroke-width="1.4"/><circle cx="8.5" cy="6" r=".9" fill="#fff"/></svg>
<svg style="left:263px;top:33px" width="17" height="17" viewBox="0 0 17 17"><path d="M1.5 .5h8l3 3v12h-11z" fill="#fbfbfb" stroke="#9aa3b2"/><rect x="5" y="8" width="4" height="7" rx="1" fill="#3a3f48"/><rect x="10.5" y="8" width="4" height="7" rx="1" fill="#3a3f48"/><path d="M6 8V6h2v2M11.5 8V6h2v2M9 10h1.5" stroke="#3a3f48" stroke-width="1"/></svg>
<div class="t" style="left:284px;top:37px;font-size:12px;color:#10141c;letter-spacing:.02px">Chuyển đến đối tượng được chọn</div>
<svg style="left:471px;top:33px" width="17" height="17" viewBox="0 0 17 17"><path d="M1.5 3h3M1.5 8h3M1.5 13h3" stroke="#2a7fe0" stroke-width="2.4"/><path d="M6.5 3h9M6.5 8h9M6.5 13h9" stroke="#2a7fe0" stroke-width="2"/></svg>
<svg style="left:492px;top:33px" width="17" height="17" viewBox="0 0 17 17"><path d="M1.5 1.5h14v10h-6l-3 3.5v-3.5h-5z" fill="#dcebfb" stroke="#3f7fd0" stroke-width="1.3"/><path d="M4 5h9M4 8h9" stroke="#3f7fd0" stroke-width="1.1"/></svg>
<div class="t" style="right:7px;top:37px;font-size:12px;color:#10141c;letter-spacing:-.15px">0.0000 : 0.0000</div>
<div class="a" style="left:791px;top:33px;width:1px;height:19px;background:#a9c3e6"></div>
<div class="a" style="left:0;top:55px;width:170px;height:529px;background:#c3dcf9"></div>
<div class="a" style="left:1px;top:55px;width:167px;height:18px;background:linear-gradient(#c6d9f1,#aec7ea);border:1px solid #9ab6de;border-bottom:none"></div>
<div class="t" style="left:5px;top:59px;font-size:11.3px;font-weight:bold;color:#1d4c9c;letter-spacing:-.05px">Cây dữ liệu</div>
<svg style="left:157px;top:60px" width="6" height="9" viewBox="0 0 6 9"><path d="M1.5 .5h3M2 .5v4M4 .5v4M.5 4.5h5M3 4.5v4" stroke="#1d3c7c" stroke-width=".9" fill="none"/></svg>
<div class="a" style="left:1px;top:73px;width:167px;height:491px;background:#fff;border:1px solid #9ab6de"></div>
<div class="a" style="left:3px;top:74px;width:12px;height:16px;background:linear-gradient(#f6f9fe,#d9e6f7);border:1px solid #b7cbe8;border-top-color:#fff"></div>
<div class="a" style="left:18px;top:78px;width:8px;height:8px;border:1px solid #a9b4c4;border-radius:2.5px;background:linear-gradient(#fff,#e9edf3)"></div><div class="a" style="left:20px;top:81.5px;width:4px;height:1px;background:#5a6270"></div>
<div class="a" style="left:26px;top:81px;width:2px;height:0;border-top:1px dotted #999"></div>
<svg style="left:28px;top:76px" width="10" height="12" viewBox="0 0 10 12"><rect x=".5" y=".5" width="3.5" height="3.5" fill="#fff" stroke="#3f7a4a" stroke-width=".9"/><rect x="5.5" y="4" width="3.5" height="3" fill="#fff" stroke="#3f7a4a" stroke-width=".9"/><rect x="5.5" y="8.5" width="3.5" height="3" fill="#fff" stroke="#3f7a4a" stroke-width=".9"/><path d="M2.2 4v6h3.3M2.2 5.5h3.3" stroke="#3f7a4a" stroke-width=".9" fill="none"/></svg>
<div class="t tr" style="left:41px;top:76px">Nhóm lớp dữ liệu điểm...</div>
<div class="a" style="left:3px;top:90px;width:12px;height:15px;background:linear-gradient(#f6f9fe,#d9e6f7);border:1px solid #b7cbe8;border-top-color:#fff"></div>
<div class="a" style="left:34px;top:90px;width:0;height:15px;border-left:1px dotted #8f8f8f"></div>
<div class="a" style="left:35px;top:97px;width:4px;height:0;border-top:1px dotted #8f8f8f"></div>
<div class="a" style="left:21px;top:90px;width:0;height:15px;border-left:1px dotted #8f8f8f"></div>
<svg style="left:39px;top:92px" width="11" height="11" viewBox="0 0 11 11"><rect x=".5" y=".5" width="10" height="10" fill="#bdeab5" stroke="#5fa35f"/><path d="M.5 10.5h10V.5" stroke="#2a4a2a" stroke-width="1.1" fill="none"/><circle cx="3.5" cy="3.7" r="1.1" fill="#1f3f1f"/><circle cx="7.5" cy="3.7" r="1.1" fill="#1f3f1f"/><circle cx="5.5" cy="6.8" r="1.1" fill="#1f3f1f"/></svg>
<div class="t tr" style="left:53px;top:92px;color:#1a1a1a">Lớp điểm tọa độ</div>
<div class="a" style="left:3px;top:105px;width:12px;height:16px;background:linear-gradient(#f6f9fe,#d9e6f7);border:1px solid #b7cbe8;border-top-color:#fff"></div>
<div class="a" style="left:34px;top:105px;width:0;height:8px;border-left:1px dotted #8f8f8f"></div>
<div class="a" style="left:35px;top:112px;width:4px;height:0;border-top:1px dotted #8f8f8f"></div>
<div class="a" style="left:21px;top:105px;width:0;height:16px;border-left:1px dotted #8f8f8f"></div>
<svg style="left:39px;top:107px" width="11" height="11" viewBox="0 0 11 11"><rect x=".5" y=".5" width="10" height="10" fill="#bdeab5" stroke="#5fa35f"/><path d="M.5 10.5h10V.5" stroke="#2a4a2a" stroke-width="1.1" fill="none"/><circle cx="3.5" cy="3.7" r="1.1" fill="#1f3f1f"/><circle cx="7.5" cy="3.7" r="1.1" fill="#1f3f1f"/><circle cx="5.5" cy="6.8" r="1.1" fill="#1f3f1f"/></svg>
<div class="t tr" style="left:53px;top:107px;color:#1a1a1a">Lớp điểm độ cao</div>
<div class="a" style="left:3px;top:121px;width:12px;height:15px;background:linear-gradient(#f6f9fe,#d9e6f7);border:1px solid #b7cbe8;border-top-color:#fff"></div>
<div class="a" style="left:18px;top:125px;width:8px;height:8px;border:1px solid #a9b4c4;border-radius:2.5px;background:linear-gradient(#fff,#e9edf3)"></div><div class="a" style="left:20px;top:128.5px;width:4px;height:1px;background:#5a6270"></div>
<div class="a" style="left:26px;top:128px;width:2px;height:0;border-top:1px dotted #999"></div>
<svg style="left:28px;top:123px" width="10" height="12" viewBox="0 0 10 12"><rect x=".5" y=".5" width="3.5" height="3.5" fill="#fff" stroke="#3f7a4a" stroke-width=".9"/><rect x="5.5" y="4" width="3.5" height="3" fill="#fff" stroke="#3f7a4a" stroke-width=".9"/><rect x="5.5" y="8.5" width="3.5" height="3" fill="#fff" stroke="#3f7a4a" stroke-width=".9"/><path d="M2.2 4v6h3.3M2.2 5.5h3.3" stroke="#3f7a4a" stroke-width=".9" fill="none"/></svg>
<div class="t tr" style="left:41px;top:123px">Nhóm lớp dữ liệu biên ...</div>
<div class="a" style="left:3px;top:136px;width:12px;height:16px;background:linear-gradient(#f6f9fe,#d9e6f7);border:1px solid #b7cbe8;border-top-color:#fff"></div>
<div class="a" style="left:34px;top:136px;width:0;height:16px;border-left:1px dotted #8f8f8f"></div>
<div class="a" style="left:35px;top:143px;width:4px;height:0;border-top:1px dotted #8f8f8f"></div>
<div class="a" style="left:21px;top:136px;width:0;height:16px;border-left:1px dotted #8f8f8f"></div>
<svg style="left:39px;top:138px" width="11" height="11" viewBox="0 0 11 11"><rect x=".5" y=".5" width="10" height="10" fill="#bdeab5" stroke="#5fa35f"/><path d="M.5 10.5h10V.5" stroke="#2a4a2a" stroke-width="1.1" fill="none"/><circle cx="3.5" cy="3.7" r="1.1" fill="#1f3f1f"/><circle cx="7.5" cy="3.7" r="1.1" fill="#1f3f1f"/><circle cx="5.5" cy="6.8" r="1.1" fill="#1f3f1f"/></svg>
<div class="t tr" style="left:53px;top:138px;color:#1a1a1a">Lớp mốc biên giới, đ...</div>
<div class="a" style="left:3px;top:152px;width:12px;height:15px;background:linear-gradient(#f6f9fe,#d9e6f7);border:1px solid #b7cbe8;border-top-color:#fff"></div>
<div class="a" style="left:34px;top:152px;width:0;height:15px;border-left:1px dotted #8f8f8f"></div>
<div class="a" style="left:35px;top:159px;width:4px;height:0;border-top:1px dotted #8f8f8f"></div>
<div class="a" style="left:21px;top:152px;width:0;height:15px;border-left:1px dotted #8f8f8f"></div>
<svg style="left:39px;top:154px" width="11" height="11" viewBox="0 0 11 11"><rect x=".5" y=".5" width="10" height="10" fill="#c7caef" stroke="#7f83b0"/><path d="M.5 10.5h10V.5" stroke="#3a3c5a" stroke-width="1.1" fill="none"/><path d="M2.5 6.5h5.5M5.5 6.5V3M4 3h3M7.5 5v4" stroke="#1f2466" stroke-width="1.1" fill="none"/></svg>
<div class="t tr" style="left:53px;top:154px;color:#1a1a1a">Lớp đường biên giới</div>
<div class="a" style="left:3px;top:167px;width:12px;height:16px;background:linear-gradient(#f6f9fe,#d9e6f7);border:1px solid #b7cbe8;border-top-color:#fff"></div>
<div class="a" style="left:34px;top:167px;width:0;height:16px;border-left:1px dotted #8f8f8f"></div>
<div class="a" style="left:35px;top:174px;width:4px;height:0;border-top:1px dotted #8f8f8f"></div>
<div class="a" style="left:21px;top:167px;width:0;height:16px;border-left:1px dotted #8f8f8f"></div>
<svg style="left:39px;top:169px" width="11" height="11" viewBox="0 0 11 11"><rect x=".5" y=".5" width="10" height="10" fill="#c7caef" stroke="#7f83b0"/><path d="M.5 10.5h10V.5" stroke="#3a3c5a" stroke-width="1.1" fill="none"/><path d="M2.5 6.5h5.5M5.5 6.5V3M4 3h3M7.5 5v4" stroke="#1f2466" stroke-width="1.1" fill="none"/></svg>
<div class="t tr" style="left:53px;top:169px;color:#1a1a1a">Lớp đường địa giới h...</div>
<div class="a" style="left:3px;top:183px;width:12px;height:15px;background:linear-gradient(#f6f9fe,#d9e6f7);border:1px solid #b7cbe8;border-top-color:#fff"></div>
<div class="a" style="left:34px;top:183px;width:0;height:15px;border-left:1px dotted #8f8f8f"></div>
<div class="a" style="left:35px;top:190px;width:4px;height:0;border-top:1px dotted #8f8f8f"></div>
<div class="a" style="left:21px;top:183px;width:0;height:15px;border-left:1px dotted #8f8f8f"></div>
<svg style="left:39px;top:185px" width="11" height="11" viewBox="0 0 11 11"><rect x=".5" y=".5" width="10" height="10" fill="#c7caef" stroke="#7f83b0"/><path d="M.5 10.5h10V.5" stroke="#3a3c5a" stroke-width="1.1" fill="none"/><path d="M2.5 6.5h5.5M5.5 6.5V3M4 3h3M7.5 5v4" stroke="#1f2466" stroke-width="1.1" fill="none"/></svg>
<div class="t tr" style="left:53px;top:185px;color:#1a1a1a">Lớp đường địa giới h...</div>
<div class="a" style="left:3px;top:198px;width:12px;height:16px;background:linear-gradient(#f6f9fe,#d9e6f7);border:1px solid #b7cbe8;border-top-color:#fff"></div>
<div class="a" style="left:34px;top:198px;width:0;height:16px;border-left:1px dotted #8f8f8f"></div>
<div class="a" style="left:35px;top:205px;width:4px;height:0;border-top:1px dotted #8f8f8f"></div>
<div class="a" style="left:21px;top:198px;width:0;height:16px;border-left:1px dotted #8f8f8f"></div>
<svg style="left:39px;top:200px" width="11" height="11" viewBox="0 0 11 11"><rect x=".5" y=".5" width="10" height="10" fill="#c7caef" stroke="#7f83b0"/><path d="M.5 10.5h10V.5" stroke="#3a3c5a" stroke-width="1.1" fill="none"/><path d="M2.5 6.5h5.5M5.5 6.5V3M4 3h3M7.5 5v4" stroke="#1f2466" stroke-width="1.1" fill="none"/></svg>
<div class="t tr" style="left:53px;top:200px;color:#1a1a1a">Lớp đường địa giới h...</div>
<div class="a" style="left:3px;top:214px;width:12px;height:16px;background:linear-gradient(#f6f9fe,#d9e6f7);border:1px solid #b7cbe8;border-top-color:#fff"></div>
<div class="a" style="left:34px;top:214px;width:0;height:16px;border-left:1px dotted #8f8f8f"></div>
<div class="a" style="left:35px;top:221px;width:4px;height:0;border-top:1px dotted #8f8f8f"></div>
<div class="a" style="left:21px;top:214px;width:0;height:16px;border-left:1px dotted #8f8f8f"></div>
<svg style="left:39px;top:216px" width="11" height="11" viewBox="0 0 11 11"><rect x=".5" y=".5" width="10" height="10" fill="#d3cec7" stroke="#7d786f"/><path d="M.5 10.5h10V.5" stroke="#3f3b35" stroke-width="1.1" fill="none"/><path d="M3 3.5h4.5L3.5 7.5H8" stroke="#fff" stroke-width="1.2" fill="none"/><path d="M3 4.5h3M5 8.3h3" stroke="#5a554c" stroke-width=".7" fill="none"/></svg>
<div class="t tr" style="left:53px;top:216px;color:#1a1a1a">Lớp địa phận hành c...</div>
<div class="a" style="left:3px;top:230px;width:12px;height:15px;background:linear-gradient(#f6f9fe,#d9e6f7);border:1px solid #b7cbe8;border-top-color:#fff"></div>
<div class="a" style="left:34px;top:230px;width:0;height:15px;border-left:1px dotted #8f8f8f"></div>
<div class="a" style="left:35px;top:237px;width:4px;height:0;border-top:1px dotted #8f8f8f"></div>
<div class="a" style="left:21px;top:230px;width:0;height:15px;border-left:1px dotted #8f8f8f"></div>
<svg style="left:39px;top:232px" width="11" height="11" viewBox="0 0 11 11"><rect x=".5" y=".5" width="10" height="10" fill="#d3cec7" stroke="#7d786f"/><path d="M.5 10.5h10V.5" stroke="#3f3b35" stroke-width="1.1" fill="none"/><path d="M3 3.5h4.5L3.5 7.5H8" stroke="#fff" stroke-width="1.2" fill="none"/><path d="M3 4.5h3M5 8.3h3" stroke="#5a554c" stroke-width=".7" fill="none"/></svg>
<div class="t tr" style="left:53px;top:232px;color:#1a1a1a">Lớp địa phận hành c...</div>
<div class="a" style="left:3px;top:245px;width:12px;height:16px;background:linear-gradient(#f6f9fe,#d9e6f7);border:1px solid #b7cbe8;border-top-color:#fff"></div>
<div class="a" style="left:34px;top:245px;width:0;height:8px;border-left:1px dotted #8f8f8f"></div>
<div class="a" style="left:35px;top:252px;width:4px;height:0;border-top:1px dotted #8f8f8f"></div>
<div class="a" style="left:21px;top:245px;width:0;height:16px;border-left:1px dotted #8f8f8f"></div>
<svg style="left:39px;top:247px" width="11" height="11" viewBox="0 0 11 11"><rect x=".5" y=".5" width="10" height="10" fill="#d3cec7" stroke="#7d786f"/><path d="M.5 10.5h10V.5" stroke="#3f3b35" stroke-width="1.1" fill="none"/><path d="M3 3.5h4.5L3.5 7.5H8" stroke="#fff" stroke-width="1.2" fill="none"/><path d="M3 4.5h3M5 8.3h3" stroke="#5a554c" stroke-width=".7" fill="none"/></svg>
<div class="t tr" style="left:53px;top:247px;color:#1a1a1a">Lớp địa phận hành c...</div>
<div class="a" style="left:3px;top:261px;width:12px;height:15px;background:linear-gradient(#f6f9fe,#d9e6f7);border:1px solid #b7cbe8;border-top-color:#fff"></div>
<div class="a" style="left:18px;top:265px;width:8px;height:8px;border:1px solid #a9b4c4;border-radius:2.5px;background:linear-gradient(#fff,#e9edf3)"></div><div class="a" style="left:20px;top:268.5px;width:4px;height:1px;background:#5a6270"></div>
<div class="a" style="left:26px;top:268px;width:2px;height:0;border-top:1px dotted #999"></div>
<svg style="left:28px;top:263px" width="10" height="12" viewBox="0 0 10 12"><rect x=".5" y=".5" width="3.5" height="3.5" fill="#fff" stroke="#3f7a4a" stroke-width=".9"/><rect x="5.5" y="4" width="3.5" height="3" fill="#fff" stroke="#3f7a4a" stroke-width=".9"/><rect x="5.5" y="8.5" width="3.5" height="3" fill="#fff" stroke="#3f7a4a" stroke-width=".9"/><path d="M2.2 4v6h3.3M2.2 5.5h3.3" stroke="#3f7a4a" stroke-width=".9" fill="none"/></svg>
<div class="t tr" style="left:41px;top:263px">Nhóm lớp dữ liệu thủy ...</div>
<div class="a" style="left:3px;top:276px;width:12px;height:16px;background:linear-gradient(#f6f9fe,#d9e6f7);border:1px solid #b7cbe8;border-top-color:#fff"></div>
<div class="a" style="left:34px;top:276px;width:0;height:16px;border-left:1px dotted #8f8f8f"></div>
<div class="a" style="left:35px;top:283px;width:4px;height:0;border-top:1px dotted #8f8f8f"></div>
<div class="a" style="left:21px;top:276px;width:0;height:16px;border-left:1px dotted #8f8f8f"></div>
<svg style="left:39px;top:278px" width="11" height="11" viewBox="0 0 11 11"><rect x=".5" y=".5" width="10" height="10" fill="#c7caef" stroke="#7f83b0"/><path d="M.5 10.5h10V.5" stroke="#3a3c5a" stroke-width="1.1" fill="none"/><path d="M2.5 6.5h5.5M5.5 6.5V3M4 3h3M7.5 5v4" stroke="#1f2466" stroke-width="1.1" fill="none"/></svg>
<div class="t tr" style="left:53px;top:278px;color:#1a1a1a">Lớp thủy hệ dạng đư...</div>
<div class="a" style="left:3px;top:292px;width:12px;height:15px;background:linear-gradient(#f6f9fe,#d9e6f7);border:1px solid #b7cbe8;border-top-color:#fff"></div>
<div class="a" style="left:34px;top:292px;width:0;height:8px;border-left:1px dotted #8f8f8f"></div>
<div class="a" style="left:35px;top:299px;width:4px;height:0;border-top:1px dotted #8f8f8f"></div>
<div class="a" style="left:21px;top:292px;width:0;height:15px;border-left:1px dotted #8f8f8f"></div>
<svg style="left:39px;top:294px" width="11" height="11" viewBox="0 0 11 11"><rect x=".5" y=".5" width="10" height="10" fill="#d3cec7" stroke="#7d786f"/><path d="M.5 10.5h10V.5" stroke="#3f3b35" stroke-width="1.1" fill="none"/><path d="M3 3.5h4.5L3.5 7.5H8" stroke="#fff" stroke-width="1.2" fill="none"/><path d="M3 4.5h3M5 8.3h3" stroke="#5a554c" stroke-width=".7" fill="none"/></svg>
<div class="t tr" style="left:53px;top:294px;color:#1a1a1a">Lớp thủy hệ dạng vù...</div>
<div class="a" style="left:3px;top:307px;width:12px;height:16px;background:linear-gradient(#f6f9fe,#d9e6f7);border:1px solid #b7cbe8;border-top-color:#fff"></div>
<div class="a" style="left:18px;top:311px;width:8px;height:8px;border:1px solid #a9b4c4;border-radius:2.5px;background:linear-gradient(#fff,#e9edf3)"></div><div class="a" style="left:20px;top:314.5px;width:4px;height:1px;background:#5a6270"></div>
<div class="a" style="left:26px;top:314px;width:2px;height:0;border-top:1px dotted #999"></div>
<svg style="left:28px;top:309px" width="10" height="12" viewBox="0 0 10 12"><rect x=".5" y=".5" width="3.5" height="3.5" fill="#fff" stroke="#3f7a4a" stroke-width=".9"/><rect x="5.5" y="4" width="3.5" height="3" fill="#fff" stroke="#3f7a4a" stroke-width=".9"/><rect x="5.5" y="8.5" width="3.5" height="3" fill="#fff" stroke="#3f7a4a" stroke-width=".9"/><path d="M2.2 4v6h3.3M2.2 5.5h3.3" stroke="#3f7a4a" stroke-width=".9" fill="none"/></svg>
<div class="t tr" style="left:41px;top:309px">Nhóm lớp dữ liệu giao ...</div>
<div class="a" style="left:3px;top:323px;width:12px;height:16px;background:linear-gradient(#f6f9fe,#d9e6f7);border:1px solid #b7cbe8;border-top-color:#fff"></div>
<div class="a" style="left:34px;top:323px;width:0;height:16px;border-left:1px dotted #8f8f8f"></div>
<div class="a" style="left:35px;top:330px;width:4px;height:0;border-top:1px dotted #8f8f8f"></div>
<div class="a" style="left:21px;top:323px;width:0;height:16px;border-left:1px dotted #8f8f8f"></div>
<svg style="left:39px;top:325px" width="11" height="11" viewBox="0 0 11 11"><rect x=".5" y=".5" width="10" height="10" fill="#c7caef" stroke="#7f83b0"/><path d="M.5 10.5h10V.5" stroke="#3a3c5a" stroke-width="1.1" fill="none"/><path d="M2.5 6.5h5.5M5.5 6.5V3M4 3h3M7.5 5v4" stroke="#1f2466" stroke-width="1.1" fill="none"/></svg>
<div class="t tr" style="left:53px;top:325px;color:#1a1a1a">Lớp tim đường</div>
<div class="a" style="left:3px;top:339px;width:12px;height:15px;background:linear-gradient(#f6f9fe,#d9e6f7);border:1px solid #b7cbe8;border-top-color:#fff"></div>
<div class="a" style="left:34px;top:339px;width:0;height:15px;border-left:1px dotted #8f8f8f"></div>
<div class="a" style="left:35px;top:346px;width:4px;height:0;border-top:1px dotted #8f8f8f"></div>
<div class="a" style="left:21px;top:339px;width:0;height:15px;border-left:1px dotted #8f8f8f"></div>
<svg style="left:39px;top:341px" width="11" height="11" viewBox="0 0 11 11"><rect x=".5" y=".5" width="10" height="10" fill="#d3cec7" stroke="#7d786f"/><path d="M.5 10.5h10V.5" stroke="#3f3b35" stroke-width="1.1" fill="none"/><path d="M3 3.5h4.5L3.5 7.5H8" stroke="#fff" stroke-width="1.2" fill="none"/><path d="M3 4.5h3M5 8.3h3" stroke="#5a554c" stroke-width=".7" fill="none"/></svg>
<div class="t tr" style="left:53px;top:341px;color:#1a1a1a">Lớp mặt đường bộ</div>
<div class="a" style="left:3px;top:354px;width:12px;height:16px;background:linear-gradient(#f6f9fe,#d9e6f7);border:1px solid #b7cbe8;border-top-color:#fff"></div>
<div class="a" style="left:34px;top:354px;width:0;height:16px;border-left:1px dotted #8f8f8f"></div>
<div class="a" style="left:35px;top:361px;width:4px;height:0;border-top:1px dotted #8f8f8f"></div>
<div class="a" style="left:21px;top:354px;width:0;height:16px;border-left:1px dotted #8f8f8f"></div>
<svg style="left:39px;top:356px" width="11" height="11" viewBox="0 0 11 11"><rect x=".5" y=".5" width="10" height="10" fill="#c7caef" stroke="#7f83b0"/><path d="M.5 10.5h10V.5" stroke="#3a3c5a" stroke-width="1.1" fill="none"/><path d="M2.5 6.5h5.5M5.5 6.5V3M4 3h3M7.5 5v4" stroke="#1f2466" stroke-width="1.1" fill="none"/></svg>
<div class="t tr" style="left:53px;top:356px;color:#1a1a1a">Lớp ranh giới đường</div>
<div class="a" style="left:3px;top:370px;width:12px;height:15px;background:linear-gradient(#f6f9fe,#d9e6f7);border:1px solid #b7cbe8;border-top-color:#fff"></div>
<div class="a" style="left:34px;top:370px;width:0;height:8px;border-left:1px dotted #8f8f8f"></div>
<div class="a" style="left:35px;top:377px;width:4px;height:0;border-top:1px dotted #8f8f8f"></div>
<div class="a" style="left:21px;top:370px;width:0;height:15px;border-left:1px dotted #8f8f8f"></div>
<svg style="left:39px;top:372px" width="11" height="11" viewBox="0 0 11 11"><rect x=".5" y=".5" width="10" height="10" fill="#c7caef" stroke="#7f83b0"/><path d="M.5 10.5h10V.5" stroke="#3a3c5a" stroke-width="1.1" fill="none"/><path d="M2.5 6.5h5.5M5.5 6.5V3M4 3h3M7.5 5v4" stroke="#1f2466" stroke-width="1.1" fill="none"/></svg>
<div class="t tr" style="left:53px;top:372px;color:#1a1a1a">Lớp đường sắt</div>
<div class="a" style="left:3px;top:385px;width:12px;height:16px;background:linear-gradient(#f6f9fe,#d9e6f7);border:1px solid #b7cbe8;border-top-color:#fff"></div>
<div class="a" style="left:18px;top:389px;width:8px;height:8px;border:1px solid #a9b4c4;border-radius:2.5px;background:linear-gradient(#fff,#e9edf3)"></div><div class="a" style="left:20px;top:392.5px;width:4px;height:1px;background:#5a6270"></div>
<div class="a" style="left:26px;top:392px;width:2px;height:0;border-top:1px dotted #999"></div>
<svg style="left:28px;top:387px" width="10" height="12" viewBox="0 0 10 12"><rect x=".5" y=".5" width="3.5" height="3.5" fill="#fff" stroke="#3f7a4a" stroke-width=".9"/><rect x="5.5" y="4" width="3.5" height="3" fill="#fff" stroke="#3f7a4a" stroke-width=".9"/><rect x="5.5" y="8.5" width="3.5" height="3" fill="#fff" stroke="#3f7a4a" stroke-width=".9"/><path d="M2.2 4v6h3.3M2.2 5.5h3.3" stroke="#3f7a4a" stroke-width=".9" fill="none"/></svg>
<div class="t tr" style="left:41px;top:387px">Nhóm lớp dữ liệu địa d...</div>
<div class="a" style="left:3px;top:401px;width:12px;height:15px;background:linear-gradient(#f6f9fe,#d9e6f7);border:1px solid #b7cbe8;border-top-color:#fff"></div>
<div class="a" style="left:34px;top:401px;width:0;height:15px;border-left:1px dotted #8f8f8f"></div>
<div class="a" style="left:35px;top:408px;width:4px;height:0;border-top:1px dotted #8f8f8f"></div>
<div class="a" style="left:21px;top:401px;width:0;height:15px;border-left:1px dotted #8f8f8f"></div>
<svg style="left:39px;top:403px" width="11" height="11" viewBox="0 0 11 11"><rect x=".5" y=".5" width="10" height="10" fill="#bdeab5" stroke="#5fa35f"/><path d="M.5 10.5h10V.5" stroke="#2a4a2a" stroke-width="1.1" fill="none"/><circle cx="3.5" cy="3.7" r="1.1" fill="#1f3f1f"/><circle cx="7.5" cy="3.7" r="1.1" fill="#1f3f1f"/><circle cx="5.5" cy="6.8" r="1.1" fill="#1f3f1f"/></svg>
<div class="t tr" style="left:53px;top:403px;color:#1a1a1a">Lớp điểm địa danh</div>
<div class="a" style="left:3px;top:416px;width:12px;height:16px;background:linear-gradient(#f6f9fe,#d9e6f7);border:1px solid #b7cbe8;border-top-color:#fff"></div>
<div class="a" style="left:34px;top:416px;width:0;height:8px;border-left:1px dotted #8f8f8f"></div>
<div class="a" style="left:35px;top:423px;width:4px;height:0;border-top:1px dotted #8f8f8f"></div>
<div class="a" style="left:21px;top:416px;width:0;height:16px;border-left:1px dotted #8f8f8f"></div>
<svg style="left:39px;top:418px" width="11" height="11" viewBox="0 0 11 11"><rect x=".5" y=".5" width="10" height="10" fill="#bdeab5" stroke="#5fa35f"/><path d="M.5 10.5h10V.5" stroke="#2a4a2a" stroke-width="1.1" fill="none"/><circle cx="3.5" cy="3.7" r="1.1" fill="#1f3f1f"/><circle cx="7.5" cy="3.7" r="1.1" fill="#1f3f1f"/><circle cx="5.5" cy="6.8" r="1.1" fill="#1f3f1f"/></svg>
<div class="t tr" style="left:53px;top:418px;color:#1a1a1a">Lớp điểm ghi chú</div>
<div class="a" style="left:3px;top:432px;width:12px;height:15px;background:linear-gradient(#f6f9fe,#d9e6f7);border:1px solid #b7cbe8;border-top-color:#fff"></div>
<div class="a" style="left:18px;top:436px;width:8px;height:8px;border:1px solid #a9b4c4;border-radius:2.5px;background:linear-gradient(#fff,#e9edf3)"></div><div class="a" style="left:20px;top:439.5px;width:4px;height:1px;background:#5a6270"></div>
<div class="a" style="left:26px;top:439px;width:2px;height:0;border-top:1px dotted #999"></div>
<svg style="left:28px;top:434px" width="10" height="12" viewBox="0 0 10 12"><rect x=".5" y=".5" width="3.5" height="3.5" fill="#fff" stroke="#3f7a4a" stroke-width=".9"/><rect x="5.5" y="4" width="3.5" height="3" fill="#fff" stroke="#3f7a4a" stroke-width=".9"/><rect x="5.5" y="8.5" width="3.5" height="3" fill="#fff" stroke="#3f7a4a" stroke-width=".9"/><path d="M2.2 4v6h3.3M2.2 5.5h3.3" stroke="#3f7a4a" stroke-width=".9" fill="none"/></svg>
<div class="t tr" style="left:41px;top:434px">Nhóm lớp dữ liệu địa c...</div>
<div class="a" style="left:3px;top:447px;width:12px;height:16px;background:linear-gradient(#f6f9fe,#d9e6f7);border:1px solid #b7cbe8;border-top-color:#fff"></div>
<div class="a" style="left:15px;top:447px;width:149px;height:16px;background:#3067c8"></div>
<svg style="left:7px;top:451px" width="6" height="8" viewBox="0 0 6 8"><path d="M1 .5l3.5 3.5L1 7.5" stroke="#7a8aa8" stroke-width="1" fill="none"/></svg>
<div class="a" style="left:34px;top:447px;width:0;height:16px;border-left:1px dotted #8f8f8f"></div>
<div class="a" style="left:35px;top:454px;width:4px;height:0;border-top:1px dotted #8f8f8f"></div>
<svg style="left:39px;top:449px" width="11" height="11" viewBox="0 0 11 11"><rect x=".5" y=".5" width="10" height="10" fill="#c3c6ea" stroke="#e8e9f8"/><path d="M.5 10.5h10V.5" stroke="#1a1c3a" stroke-width="1.1" fill="none"/><rect x="3" y="3" width="5" height="5" fill="#2a2f6a"/></svg>
<div class="t tr" style="left:53px;top:449px;color:#fff">Lớp thửa đất</div>
<div class="a" style="left:3px;top:463px;width:12px;height:16px;background:linear-gradient(#f6f9fe,#d9e6f7);border:1px solid #b7cbe8;border-top-color:#fff"></div>
<div class="a" style="left:34px;top:463px;width:0;height:16px;border-left:1px dotted #8f8f8f"></div>
<div class="a" style="left:35px;top:470px;width:4px;height:0;border-top:1px dotted #8f8f8f"></div>
<svg style="left:39px;top:465px" width="11" height="11" viewBox="0 0 11 11"><rect x=".5" y=".5" width="10" height="10" fill="#d3cec7" stroke="#7d786f"/><path d="M.5 10.5h10V.5" stroke="#3f3b35" stroke-width="1.1" fill="none"/><path d="M3 3.5h4.5L3.5 7.5H8" stroke="#fff" stroke-width="1.2" fill="none"/><path d="M3 4.5h3M5 8.3h3" stroke="#5a554c" stroke-width=".7" fill="none"/></svg>
<div class="t tr" style="left:53px;top:465px;color:#1a1a1a">Lớp tài sản gắn liền ...</div>
<div class="a" style="left:3px;top:479px;width:12px;height:15px;background:linear-gradient(#f6f9fe,#d9e6f7);border:1px solid #b7cbe8;border-top-color:#fff"></div>
<div class="a" style="left:34px;top:479px;width:0;height:15px;border-left:1px dotted #8f8f8f"></div>
<div class="a" style="left:35px;top:486px;width:4px;height:0;border-top:1px dotted #8f8f8f"></div>
<svg style="left:39px;top:481px" width="11" height="11" viewBox="0 0 11 11"><rect x=".5" y=".5" width="10" height="10" fill="#c7caef" stroke="#7f83b0"/><path d="M.5 10.5h10V.5" stroke="#3a3c5a" stroke-width="1.1" fill="none"/><path d="M2.5 6.5h5.5M5.5 6.5V3M4 3h3M7.5 5v4" stroke="#1f2466" stroke-width="1.1" fill="none"/></svg>
<div class="t tr" style="left:53px;top:481px;color:#1a1a1a">Lớp đường chỉ giới ...</div>
<div class="a" style="left:3px;top:494px;width:12px;height:16px;background:linear-gradient(#f6f9fe,#d9e6f7);border:1px solid #b7cbe8;border-top-color:#fff"></div>
<div class="a" style="left:34px;top:494px;width:0;height:16px;border-left:1px dotted #8f8f8f"></div>
<div class="a" style="left:35px;top:501px;width:4px;height:0;border-top:1px dotted #8f8f8f"></div>
<svg style="left:39px;top:496px" width="11" height="11" viewBox="0 0 11 11"><rect x=".5" y=".5" width="10" height="10" fill="#bdeab5" stroke="#5fa35f"/><path d="M.5 10.5h10V.5" stroke="#2a4a2a" stroke-width="1.1" fill="none"/><circle cx="3.5" cy="3.7" r="1.1" fill="#1f3f1f"/><circle cx="7.5" cy="3.7" r="1.1" fill="#1f3f1f"/><circle cx="5.5" cy="6.8" r="1.1" fill="#1f3f1f"/></svg>
<div class="t tr" style="left:53px;top:496px;color:#1a1a1a">Lớp mốc chỉ giới ...</div>
<div class="a" style="left:3px;top:510px;width:12px;height:15px;background:linear-gradient(#f6f9fe,#d9e6f7);border:1px solid #b7cbe8;border-top-color:#fff"></div>
<div class="a" style="left:34px;top:510px;width:0;height:15px;border-left:1px dotted #8f8f8f"></div>
<div class="a" style="left:35px;top:517px;width:4px;height:0;border-top:1px dotted #8f8f8f"></div>
<svg style="left:39px;top:512px" width="11" height="11" viewBox="0 0 11 11"><rect x=".5" y=".5" width="10" height="10" fill="#c7caef" stroke="#7f83b0"/><path d="M.5 10.5h10V.5" stroke="#3a3c5a" stroke-width="1.1" fill="none"/><path d="M2.5 6.5h5.5M5.5 6.5V3M4 3h3M7.5 5v4" stroke="#1f2466" stroke-width="1.1" fill="none"/></svg>
<div class="t tr" style="left:53px;top:512px;color:#1a1a1a">Lớp đường quy hoạch</div>
<div class="a" style="left:3px;top:525px;width:12px;height:16px;background:linear-gradient(#f6f9fe,#d9e6f7);border:1px solid #b7cbe8;border-top-color:#fff"></div>
<div class="a" style="left:34px;top:525px;width:0;height:8px;border-left:1px dotted #8f8f8f"></div>
<div class="a" style="left:35px;top:532px;width:4px;height:0;border-top:1px dotted #8f8f8f"></div>
<svg style="left:39px;top:527px" width="11" height="11" viewBox="0 0 11 11"><rect x=".5" y=".5" width="10" height="10" fill="#bdeab5" stroke="#5fa35f"/><path d="M.5 10.5h10V.5" stroke="#2a4a2a" stroke-width="1.1" fill="none"/><circle cx="3.5" cy="3.7" r="1.1" fill="#1f3f1f"/><circle cx="7.5" cy="3.7" r="1.1" fill="#1f3f1f"/><circle cx="5.5" cy="6.8" r="1.1" fill="#1f3f1f"/></svg>
<div class="t tr" style="left:53px;top:527px;color:#1a1a1a">Lớp mốc giới quy hoạ...</div>
<div class="a" style="left:2px;top:564px;width:65px;height:19px;background:#fff;border:1px solid #9ab6de;border-top:none"></div>
<div class="t tr" style="left:8px;top:570px;font-size:10.8px">Cây dữ liệu</div>
<div class="t tr" style="left:71px;top:570px;font-size:10.8px;color:#1d3c7c">Lớp bản đồ</div>
<div class="a" style="left:131px;top:566px;width:1px;height:15px;background:#9ab6de"></div>
<div class="a" style="left:166px;top:55px;width:3px;height:529px;background:#b4cbec"></div>
<div class="a" style="left:169px;top:55px;width:626px;height:361px;background:#fff"></div>
<div class="a" style="left:169px;top:416px;width:626px;height:168px;background:#c3dcf9"></div>
<div class="a" style="left:169px;top:416px;width:626px;height:19px;background:linear-gradient(#c6d9f1,#b2caeb);border-top:1px solid #9ab6de"></div>
<div class="t" style="left:174px;top:420px;font-size:11.5px;font-weight:bold;color:#1d4c9c;letter-spacing:-.05px">Bảng thuộc tính</div>
<svg style="left:784px;top:422px" width="6" height="9" viewBox="0 0 6 9"><path d="M1.5 .5h3M2 .5v4M4 .5v4M.5 4.5h5M3 4.5v4" stroke="#1d3c7c" stroke-width=".9" fill="none"/></svg>
<div class="a" style="left:172px;top:435px;width:620px;height:107px;background:#fff;border:1px solid #a9c3e6;border-bottom:none"></div>
<div class="a" style="left:173px;top:436px;width:618px;height:16px;background:linear-gradient(#ffffff,#dce8f8);border-bottom:1px solid #a9c3e6"></div>
<div class="a" style="left:183px;top:436px;width:1px;height:16px;background:#a9c3e6"></div>
<div class="a" style="left:173px;top:467px;width:618px;height:5px;border-top:1px solid #a9c3e6;border-bottom:1px solid #a9c3e6;background:#f1f6fd"></div>
<div class="a" style="left:172px;top:542px;width:620px;height:18px;background:#f3f3f3"></div>
<div class="a" style="left:172px;top:542px;width:73px;height:18px;background:#e3ecf9"></div>
<div class="a" style="left:196px;top:542px;width:27px;height:18px;background:#fff"></div>
<svg style="left:175px;top:547px" width="9" height="7" viewBox="0 0 9 7"><path d="M.5 0v7" stroke="#8a9bb8" stroke-width="1"/><path d="M5 0L1.5 3.5 5 7z" fill="#8a9bb8"/><path d="M8.5 0L5 3.5 8.5 7z" fill="#8a9bb8" opacity="0"/></svg>
<svg style="left:187px;top:547px" width="5" height="7" viewBox="0 0 5 7"><path d="M4 0L.5 3.5 4 7z" fill="#8a9bb8"/></svg>
<div class="t" style="left:198px;top:546px;font-size:12px;color:#222;letter-spacing:0px">0 / 0</div>
<svg style="left:227px;top:547px" width="5" height="7" viewBox="0 0 5 7"><path d="M0 0l3.5 3.5L0 7z" fill="#8a9bb8"/></svg>
<svg style="left:236px;top:547px" width="7" height="7" viewBox="0 0 7 7"><path d="M0 0l3.5 3.5L0 7z" fill="#8a9bb8"/><path d="M5.5 0v7" stroke="#8a9bb8" stroke-width="1.2"/></svg>
<svg style="left:252px;top:547px" width="5" height="7" viewBox="0 0 5 7"><path d="M4 0L.5 3.5 4 7z" fill="#b9b9b9"/></svg>
<svg style="left:782px;top:547px" width="5" height="7" viewBox="0 0 5 7"><path d="M0 0l3.5 3.5L0 7z" fill="#9a9a9a"/></svg>
<div class="a" style="left:173px;top:562px;width:81px;height:20px;background:#f9b868"></div>
<div class="t" style="left:175px;top:567px;font-size:12px;color:#2a1a00;letter-spacing:-.05px">Dịch màn hình</div>
<svg style="left:748px;top:563px" width="16" height="16" viewBox="0 0 16 16"><path d="M.5 .5h13l2 2v13H.5z" fill="#2f7fe0" stroke="#1f5fb8"/><rect x="3.5" y=".5" width="8" height="5" fill="#dcebfb"/><rect x="3" y="9" width="10" height="6" fill="#8fc0f5"/><rect x="9" y="1.5" width="2" height="3" fill="#2f7fe0"/></svg>
<svg style="left:771px;top:563px" width="14" height="16" viewBox="0 0 14 16"><rect x="1.5" y="2.5" width="11" height="13" rx="1.5" fill="#e8f2fd" stroke="#2f7fe0" stroke-width="1.3"/><rect x="4" y=".5" width="6" height="3.5" rx="1" fill="#2f7fe0"/><path d="M4 7h6M4 9.5h6M4 12h6" stroke="#2f7fe0" stroke-width="1.1"/></svg>
</div>

<!-- menu -->
<div class="a" style="left:357px;top:553px;width:150px;height:83px;background:#f7f7f7;border:1px solid #ababab;box-shadow:2px 2px 3px rgba(0,0,0,.35)">
<div class="a" style="left:0;top:21px;width:17px;height:60px;background:#f0f0f0;border-right:1px solid #e3e3e3"></div>
<div class="a" style="left:0px;top:0px;width:148px;height:21px;background:#bad8f4;border:1px solid #8fbde9"></div>
<div class="t" style="left:24px;top:4.0px;font-size:12px;color:#111;letter-spacing:.06px">Mở lớp dữ liệu</div>
<div class="t" style="left:24px;top:24.3px;font-size:12px;color:#111;letter-spacing:.06px">Tắt lớp dữ liệu</div>
<div class="t" style="left:24px;top:44.6px;font-size:12px;color:#111;letter-spacing:.06px">Mở tất cả các lớp</div>
<div class="t" style="left:24px;top:64.9px;font-size:12px;color:#111;letter-spacing:.06px">Tắt tất cả các lớp</div>
</div>

<!-- taskbar -->
<div class="a" id="taskbar" style="top:684px;height:40px;background:#1f2b35">
<div class="a" style="left:405px;top:0;width:48px;height:40px;background:#3a4753"></div>
<svg style="left:16px;top:11px" width="17" height="18" viewBox="0 0 17 18"><path d="M0 2.5L7 1.5v7H0zM8 1.3L17 0v8.5H8zM0 9.5h7v7L0 15.5zM8 9.5h9V18l-9-1.3z" fill="#fff"/></svg>
<svg style="left:62px;top:8px" width="24" height="23" viewBox="0 0 24 23"><circle cx="14" cy="9" r="7.3" fill="none" stroke="#fff" stroke-width="2.3"/><path d="M8.5 14.5L1.5 22" stroke="#fff" stroke-width="2.6" stroke-linecap="round"/></svg>
<svg style="left:113px;top:11px" width="18" height="18" viewBox="0 0 18 18"><rect x="3.5" y="3.5" width="10" height="10" fill="none" stroke="#b9c0c8" stroke-width="1.3"/><path d="M.8 1v2.5M.8 14v2.5M16.5 1v15.5M3 1.2h11M3 16h11" stroke="#b9c0c8" stroke-width="1.3"/></svg>
<svg style="left:162px;top:10px" width="24" height="19" viewBox="0 0 24 19"><path d="M0 3h9l2 2h13v14H0z" fill="#e9b53a"/><path d="M0 7h24v12H0z" fill="#f7d262"/><rect x="6" y="11" width="12" height="8" fill="#3f8fd6"/><rect x="9" y="14" width="6" height="5" fill="#f7d262"/></svg>
<svg style="left:213px;top:10px" width="23" height="19" viewBox="0 0 23 19"><rect x="8" y="1" width="14" height="17" fill="#e8f3ea" stroke="#1f7a45" stroke-width="1"/><path d="M12 1v17M17 1v17M8 5.5h14M8 10h14M8 14.5h14" stroke="#1f7a45" stroke-width=".9"/><rect x="0" y="3" width="13" height="13" fill="#1f7a45"/><path d="M3.5 6l6 7M9.5 6l-6 7" stroke="#fff" stroke-width="1.8"/></svg>
<svg style="left:263px;top:7px" width="28" height="28" viewBox="0 0 28 28"><rect x="0" y="0" width="26" height="24" rx="7" fill="#f4f8ff"/><path d="M3 22l1-5h6z" fill="#f4f8ff"/><text x="3" y="13" font-size="8.5" font-weight="bold" fill="#1f6fe0" font-family="Liberation Sans,sans-serif">Zalo</text><circle cx="19" cy="20" r="8" fill="#e02a2a"/><text x="13.5" y="23.5" font-size="9" font-weight="bold" fill="#fff" font-family="Liberation Sans,sans-serif">5+</text></svg>
<svg style="left:313px;top:8px" width="24" height="24" viewBox="0 0 24 24"><circle cx="12" cy="12" r="12" fill="#fff"/><path d="M12 12L1.6 6A12 12 0 0 1 22.4 6z" fill="#e33b2e"/><path d="M12 12L22.4 6A12 12 0 0 1 12 24z" fill="#f7c51c"/><path d="M12 12L12 24A12 12 0 0 1 1.6 6z" fill="#2da94f"/><circle cx="12" cy="12" r="5.5" fill="#fff"/><circle cx="12" cy="12" r="4.3" fill="#3f86f0"/></svg>
<svg style="left:365px;top:10px" width="23" height="19" viewBox="0 0 23 19"><rect x="8" y="1" width="14" height="17" fill="#eef2fb" stroke="#2a5699" stroke-width="1"/><path d="M14 5h6M14 8h6M14 11h6M14 14h6" stroke="#2a5699" stroke-width="1.1"/><rect x="0" y="3" width="13" height="13" fill="#2a5699"/><path d="M2.5 6l1.8 7 2.2-6 2.2 6 1.8-7" stroke="#fff" stroke-width="1.5" fill="none"/></svg>
<svg style="left:415px;top:6px" width="25" height="29" viewBox="0 0 25 29"><path d="M14 2l8 6-3 3-5-3-6 4 1 8 6 3-2 4-9-5-2-11z" fill="#e23b3b"/><path d="M12 9l8 3v8l-6 3-5-5z" fill="#2a5a8a"/><circle cx="14" cy="2.5" r="1.5" fill="#e23b3b"/></svg>
<div class="a" style="left:153px;top:38px;width:33px;height:2px;background:#8dbbe6"></div>
<div class="a" style="left:188px;top:38px;width:7px;height:2px;background:#8dbbe6"></div>
<div class="a" style="left:256px;top:38px;width:40px;height:2px;background:#8dbbe6"></div>
<div class="a" style="left:306px;top:38px;width:39px;height:2px;background:#8dbbe6"></div>
<div class="a" style="left:355px;top:38px;width:43px;height:2px;background:#8dbbe6"></div>
<svg style="left:852px;top:7px" width="26" height="24" viewBox="0 0 26 24"><path d="M5 23a5 5 0 0 1 .5-10 7.5 7.5 0 0 1 14.5 1.5A4.3 4.3 0 0 1 20 23z" fill="#b9c9e6"/><path d="M5 23a5 5 0 0 1 1-9.8c2 0 3 1 4 2 2-2 6-2 8 1 3-1 5 1 5 3.5S21 23 20 23z" fill="#dfe7f5"/><circle cx="17" cy="5.5" r="5.5" fill="#d83a2e"/><text x="15" y="9" font-size="8.5" fill="#fff" font-family="Liberation Sans,sans-serif">1</text></svg>
<div class="t" style="left:884px;top:14px;font-size:13.5px;color:#fff;letter-spacing:-.55px">32°C</div>
<div class="t" style="left:922px;top:14px;font-size:13.5px;color:#fff;letter-spacing:.4px">Nhiều mây</div>
<svg style="left:1015px;top:17px" width="13" height="8" viewBox="0 0 13 8"><path d="M.8 7L6.5 1.2 12.2 7" stroke="#fff" stroke-width="1.3" fill="none"/></svg>
<svg style="left:1038px;top:13px" width="16" height="15" viewBox="0 0 16 15"><path d="M1 5h3l4-4v13l-4-4H1z" fill="none" stroke="#fff" stroke-width="1.1"/><path d="M10.5 4.5q2 3 0 6M12.8 2.5q3.3 5 0 10" stroke="#fff" stroke-width="1" fill="none"/></svg>
<svg style="left:1061px;top:13px" width="18" height="17" viewBox="0 0 18 17"><path d="M3.5 12a3.5 3.5 0 0 1 .5-7 5 5 0 0 1 9.5 1A3 3 0 0 1 13 12z" fill="#cfd6df"/><circle cx="12.5" cy="11.5" r="4.5" fill="#d83a2e"/><path d="M10.7 9.7l3.6 3.6M14.3 9.7l-3.6 3.6" stroke="#fff" stroke-width="1.2"/></svg>
<svg style="left:1087px;top:16px" width="16" height="9" viewBox="0 0 16 9"><rect x=".5" y=".5" width="13" height="8" fill="none" stroke="#fff" stroke-width="1"/><rect x="2" y="2" width="9" height="5" fill="#fff"/><rect x="14" y="3" width="1.5" height="3" fill="#fff"/></svg>
<svg style="left:1113px;top:13px" width="14" height="14" viewBox="0 0 14 14"><path d="M1 13A12 12 0 0 1 13 1" stroke="#9aa3ad" stroke-width="1.2" fill="none"/><path d="M4.5 13A8.5 8.5 0 0 1 13 4.5" stroke="#fff" stroke-width="1.2" fill="none"/><path d="M8 13a5 5 0 0 1 5-5" stroke="#fff" stroke-width="1.2" fill="none"/><circle cx="12" cy="12.3" r="1.3" fill="#fff"/></svg>
<div class="t" style="left:1138px;top:15px;font-size:11.5px;color:#fff;letter-spacing:-.1px">ENG</div>
<div class="t" style="left:1185px;top:4px;font-size:12px;color:#fff;letter-spacing:-.15px">1:27 CH</div>
<div class="t" style="left:1175px;top:24px;font-size:12px;color:#fff;letter-spacing:.25px">10/05/2024</div>
<svg style="left:1257px;top:13px" width="24" height="23" viewBox="0 0 24 23"><path d="M.5 .5h15v11H7l-3.5 3v-3H.5z" fill="#fff"/><path d="M3 3.5h10M3 6h10M3 8.5h6" stroke="#1f2b35" stroke-width="1"/><circle cx="15.5" cy="14.5" r="7" fill="#1f2b35" stroke="#fff" stroke-width="1.1"/><text x="12.8" y="18.5" font-size="10.5" font-weight="bold" fill="#fff" font-family="Liberation Sans,sans-serif">5</text></svg>
<div class="a" style="left:1293px;top:0;width:1px;height:40px;background:#6a737d"></div>
</div>

</body></html>
